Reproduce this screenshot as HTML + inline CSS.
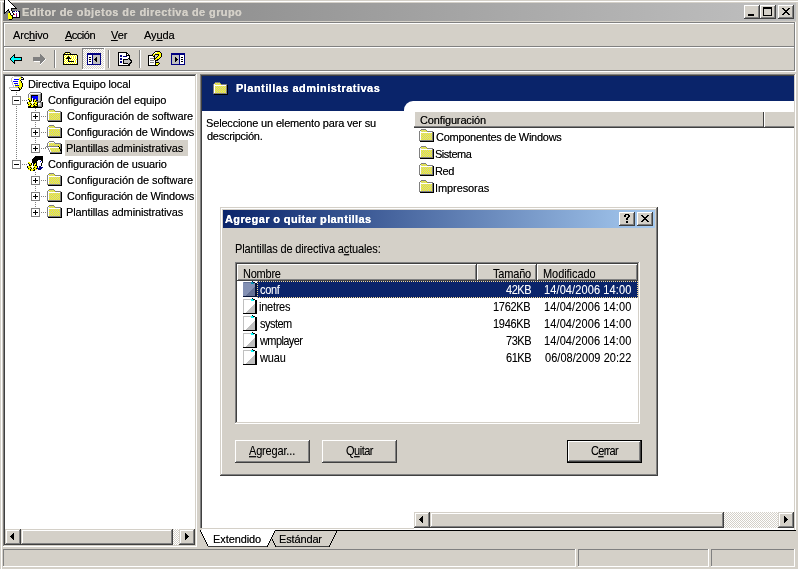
<!DOCTYPE html>
<html><head><meta charset="utf-8"><title>Editor de objetos de directiva de grupo</title><style>
html,body{margin:0;padding:0}
body{width:798px;height:569px;overflow:hidden;background:#d4d0c8;position:relative;font-family:"Liberation Sans",sans-serif;font-size:11px}
body div,body .t,body .ic{position:absolute}
.ic{shape-rendering:crispEdges;overflow:visible}
.t{white-space:pre;line-height:13px;height:13px;will-change:transform;color:#000;text-shadow:0 0 0 rgba(0,0,0,.55)}
.w{color:#fff;text-shadow:0 0 0 rgba(255,255,255,.55)}
.f{color:#d4d0c8}
.b{font-weight:bold}
.b.w{text-shadow:0 0 0 #fff}
.b.f{text-shadow:0 0 0 #d4d0c8}
.ms{text-shadow:0 0 0 rgba(0,0,0,.3)}
.ms.w{text-shadow:0 0 0 rgba(255,255,255,.3)}
.ms{transform:scaleY(1.14);transform-origin:0 10px}
u{text-decoration:underline;text-underline-offset:1px;text-decoration-thickness:1px}
</style></head><body><svg width="0" height="0" style="position:absolute"><defs><symbol id="folder" viewBox="0 0 15 13"><rect x="2" y="0" width="5" height="1" fill="#808080"/><rect x="1" y="1" width="1" height="1" fill="#808080"/><rect x="2" y="1" width="1" height="1" fill="#ffff00"/><rect x="3" y="1" width="1" height="1" fill="#c0c0c0"/><rect x="4" y="1" width="1" height="1" fill="#ffff00"/><rect x="5" y="1" width="1" height="1" fill="#c0c0c0"/><rect x="6" y="1" width="1" height="1" fill="#ffff00"/><rect x="7" y="1" width="1" height="1" fill="#808080"/><rect x="0" y="2" width="1" height="1" fill="#808080"/><rect x="1" y="2" width="1" height="1" fill="#ffffff"/><rect x="2" y="2" width="1" height="1" fill="#c0c0c0"/><rect x="3" y="2" width="1" height="1" fill="#ffff00"/><rect x="4" y="2" width="1" height="1" fill="#c0c0c0"/><rect x="5" y="2" width="1" height="1" fill="#ffff00"/><rect x="6" y="2" width="1" height="1" fill="#c0c0c0"/><rect x="7" y="2" width="1" height="1" fill="#ffff00"/><rect x="8" y="2" width="6" height="1" fill="#808080"/><rect x="0" y="3" width="1" height="1" fill="#808080"/><rect x="1" y="3" width="12" height="1" fill="#ffffff"/><rect x="13" y="3" width="1" height="1" fill="#808080"/><rect x="14" y="3" width="1" height="1" fill="#000000"/><rect x="0" y="4" width="1" height="1" fill="#808080"/><rect x="1" y="4" width="1" height="1" fill="#ffffff"/><rect x="2" y="4" width="1" height="1" fill="#ffff00"/><rect x="3" y="4" width="1" height="1" fill="#c0c0c0"/><rect x="4" y="4" width="1" height="1" fill="#ffff00"/><rect x="5" y="4" width="1" height="1" fill="#c0c0c0"/><rect x="6" y="4" width="1" height="1" fill="#ffff00"/><rect x="7" y="4" width="1" height="1" fill="#c0c0c0"/><rect x="8" y="4" width="1" height="1" fill="#ffff00"/><rect x="9" y="4" width="1" height="1" fill="#c0c0c0"/><rect x="10" y="4" width="1" height="1" fill="#ffff00"/><rect x="11" y="4" width="1" height="1" fill="#c0c0c0"/><rect x="12" y="4" width="1" height="1" fill="#ffff00"/><rect x="13" y="4" width="1" height="1" fill="#808080"/><rect x="14" y="4" width="1" height="1" fill="#000000"/><rect x="0" y="5" width="1" height="1" fill="#808080"/><rect x="1" y="5" width="1" height="1" fill="#ffffff"/><rect x="2" y="5" width="1" height="1" fill="#c0c0c0"/><rect x="3" y="5" width="1" height="1" fill="#ffff00"/><rect x="4" y="5" width="1" height="1" fill="#c0c0c0"/><rect x="5" y="5" width="1" height="1" fill="#ffff00"/><rect x="6" y="5" width="1" height="1" fill="#c0c0c0"/><rect x="7" y="5" width="1" height="1" fill="#ffff00"/><rect x="8" y="5" width="1" height="1" fill="#c0c0c0"/><rect x="9" y="5" width="1" height="1" fill="#ffff00"/><rect x="10" y="5" width="1" height="1" fill="#c0c0c0"/><rect x="11" y="5" width="1" height="1" fill="#ffff00"/><rect x="12" y="5" width="1" height="1" fill="#c0c0c0"/><rect x="13" y="5" width="1" height="1" fill="#808080"/><rect x="14" y="5" width="1" height="1" fill="#000000"/><rect x="0" y="6" width="1" height="1" fill="#808080"/><rect x="1" y="6" width="1" height="1" fill="#ffffff"/><rect x="2" y="6" width="1" height="1" fill="#ffff00"/><rect x="3" y="6" width="1" height="1" fill="#c0c0c0"/><rect x="4" y="6" width="1" height="1" fill="#ffff00"/><rect x="5" y="6" width="1" height="1" fill="#c0c0c0"/><rect x="6" y="6" width="1" height="1" fill="#ffff00"/><rect x="7" y="6" width="1" height="1" fill="#c0c0c0"/><rect x="8" y="6" width="1" height="1" fill="#ffff00"/><rect x="9" y="6" width="1" height="1" fill="#c0c0c0"/><rect x="10" y="6" width="1" height="1" fill="#ffff00"/><rect x="11" y="6" width="1" height="1" fill="#c0c0c0"/><rect x="12" y="6" width="1" height="1" fill="#ffff00"/><rect x="13" y="6" width="1" height="1" fill="#808080"/><rect x="14" y="6" width="1" height="1" fill="#000000"/><rect x="0" y="7" width="1" height="1" fill="#808080"/><rect x="1" y="7" width="1" height="1" fill="#ffffff"/><rect x="2" y="7" width="1" height="1" fill="#c0c0c0"/><rect x="3" y="7" width="1" height="1" fill="#ffff00"/><rect x="4" y="7" width="1" height="1" fill="#c0c0c0"/><rect x="5" y="7" width="1" height="1" fill="#ffff00"/><rect x="6" y="7" width="1" height="1" fill="#c0c0c0"/><rect x="7" y="7" width="1" height="1" fill="#ffff00"/><rect x="8" y="7" width="1" height="1" fill="#c0c0c0"/><rect x="9" y="7" width="1" height="1" fill="#ffff00"/><rect x="10" y="7" width="1" height="1" fill="#c0c0c0"/><rect x="11" y="7" width="1" height="1" fill="#ffff00"/><rect x="12" y="7" width="1" height="1" fill="#c0c0c0"/><rect x="13" y="7" width="1" height="1" fill="#808080"/><rect x="14" y="7" width="1" height="1" fill="#000000"/><rect x="0" y="8" width="1" height="1" fill="#808080"/><rect x="1" y="8" width="1" height="1" fill="#ffffff"/><rect x="2" y="8" width="1" height="1" fill="#ffff00"/><rect x="3" y="8" width="1" height="1" fill="#c0c0c0"/><rect x="4" y="8" width="1" height="1" fill="#ffff00"/><rect x="5" y="8" width="1" height="1" fill="#c0c0c0"/><rect x="6" y="8" width="1" height="1" fill="#ffff00"/><rect x="7" y="8" width="1" height="1" fill="#c0c0c0"/><rect x="8" y="8" width="1" height="1" fill="#ffff00"/><rect x="9" y="8" width="1" height="1" fill="#c0c0c0"/><rect x="10" y="8" width="1" height="1" fill="#ffff00"/><rect x="11" y="8" width="1" height="1" fill="#c0c0c0"/><rect x="12" y="8" width="1" height="1" fill="#ffff00"/><rect x="13" y="8" width="1" height="1" fill="#808080"/><rect x="14" y="8" width="1" height="1" fill="#000000"/><rect x="0" y="9" width="1" height="1" fill="#808080"/><rect x="1" y="9" width="1" height="1" fill="#ffffff"/><rect x="2" y="9" width="1" height="1" fill="#c0c0c0"/><rect x="3" y="9" width="1" height="1" fill="#ffff00"/><rect x="4" y="9" width="1" height="1" fill="#c0c0c0"/><rect x="5" y="9" width="1" height="1" fill="#ffff00"/><rect x="6" y="9" width="1" height="1" fill="#c0c0c0"/><rect x="7" y="9" width="1" height="1" fill="#ffff00"/><rect x="8" y="9" width="1" height="1" fill="#c0c0c0"/><rect x="9" y="9" width="1" height="1" fill="#ffff00"/><rect x="10" y="9" width="1" height="1" fill="#c0c0c0"/><rect x="11" y="9" width="1" height="1" fill="#ffff00"/><rect x="12" y="9" width="1" height="1" fill="#c0c0c0"/><rect x="13" y="9" width="1" height="1" fill="#808080"/><rect x="14" y="9" width="1" height="1" fill="#000000"/><rect x="0" y="10" width="1" height="1" fill="#808080"/><rect x="1" y="10" width="1" height="1" fill="#ffffff"/><rect x="2" y="10" width="1" height="1" fill="#ffff00"/><rect x="3" y="10" width="1" height="1" fill="#c0c0c0"/><rect x="4" y="10" width="1" height="1" fill="#ffff00"/><rect x="5" y="10" width="1" height="1" fill="#c0c0c0"/><rect x="6" y="10" width="1" height="1" fill="#ffff00"/><rect x="7" y="10" width="1" height="1" fill="#c0c0c0"/><rect x="8" y="10" width="1" height="1" fill="#ffff00"/><rect x="9" y="10" width="1" height="1" fill="#c0c0c0"/><rect x="10" y="10" width="1" height="1" fill="#ffff00"/><rect x="11" y="10" width="1" height="1" fill="#c0c0c0"/><rect x="12" y="10" width="1" height="1" fill="#ffff00"/><rect x="13" y="10" width="1" height="1" fill="#808080"/><rect x="14" y="10" width="1" height="1" fill="#000000"/><rect x="0" y="11" width="14" height="1" fill="#808080"/><rect x="14" y="11" width="1" height="1" fill="#000000"/><rect x="1" y="12" width="14" height="1" fill="#000000"/></symbol><symbol id="folderopen" viewBox="0 0 17 13"><rect x="4" y="0" width="5" height="1" fill="#808080"/><rect x="3" y="1" width="1" height="1" fill="#808080"/><rect x="4" y="1" width="5" height="1" fill="#ffffff"/><rect x="9" y="1" width="1" height="1" fill="#808080"/><rect x="2" y="2" width="1" height="1" fill="#808080"/><rect x="3" y="2" width="1" height="1" fill="#ffffff"/><rect x="4" y="2" width="1" height="1" fill="#ffff00"/><rect x="5" y="2" width="1" height="1" fill="#c0c0c0"/><rect x="6" y="2" width="1" height="1" fill="#ffff00"/><rect x="7" y="2" width="1" height="1" fill="#c0c0c0"/><rect x="8" y="2" width="1" height="1" fill="#ffff00"/><rect x="9" y="2" width="1" height="1" fill="#c0c0c0"/><rect x="10" y="2" width="6" height="1" fill="#808080"/><rect x="2" y="3" width="1" height="1" fill="#808080"/><rect x="3" y="3" width="1" height="1" fill="#ffffff"/><rect x="4" y="3" width="1" height="1" fill="#c0c0c0"/><rect x="5" y="3" width="1" height="1" fill="#ffff00"/><rect x="6" y="3" width="1" height="1" fill="#c0c0c0"/><rect x="7" y="3" width="1" height="1" fill="#ffff00"/><rect x="8" y="3" width="1" height="1" fill="#c0c0c0"/><rect x="9" y="3" width="1" height="1" fill="#ffff00"/><rect x="10" y="3" width="1" height="1" fill="#c0c0c0"/><rect x="11" y="3" width="1" height="1" fill="#ffff00"/><rect x="12" y="3" width="1" height="1" fill="#c0c0c0"/><rect x="13" y="3" width="1" height="1" fill="#ffff00"/><rect x="14" y="3" width="1" height="1" fill="#c0c0c0"/><rect x="15" y="3" width="1" height="1" fill="#808080"/><rect x="16" y="3" width="1" height="1" fill="#000000"/><rect x="2" y="4" width="1" height="1" fill="#808080"/><rect x="3" y="4" width="1" height="1" fill="#ffffff"/><rect x="4" y="4" width="1" height="1" fill="#ffff00"/><rect x="5" y="4" width="1" height="1" fill="#c0c0c0"/><rect x="6" y="4" width="1" height="1" fill="#ffff00"/><rect x="7" y="4" width="1" height="1" fill="#c0c0c0"/><rect x="8" y="4" width="1" height="1" fill="#ffff00"/><rect x="9" y="4" width="1" height="1" fill="#c0c0c0"/><rect x="10" y="4" width="1" height="1" fill="#ffff00"/><rect x="11" y="4" width="1" height="1" fill="#c0c0c0"/><rect x="12" y="4" width="1" height="1" fill="#ffff00"/><rect x="13" y="4" width="1" height="1" fill="#c0c0c0"/><rect x="14" y="4" width="1" height="1" fill="#ffff00"/><rect x="15" y="4" width="1" height="1" fill="#808080"/><rect x="16" y="4" width="1" height="1" fill="#000000"/><rect x="1" y="5" width="12" height="1" fill="#808080"/><rect x="13" y="5" width="1" height="1" fill="#000000"/><rect x="14" y="5" width="1" height="1" fill="#ffff00"/><rect x="15" y="5" width="1" height="1" fill="#808080"/><rect x="16" y="5" width="1" height="1" fill="#000000"/><rect x="0" y="6" width="1" height="1" fill="#808080"/><rect x="2" y="6" width="1" height="1" fill="#808080"/><rect x="3" y="6" width="11" height="1" fill="#ffffff"/><rect x="14" y="6" width="1" height="1" fill="#000000"/><rect x="15" y="6" width="1" height="1" fill="#808080"/><rect x="16" y="6" width="1" height="1" fill="#000000"/><rect x="0" y="7" width="1" height="1" fill="#808080"/><rect x="3" y="7" width="1" height="1" fill="#808080"/><rect x="4" y="7" width="1" height="1" fill="#ffffff"/><rect x="5" y="7" width="1" height="1" fill="#ffff00"/><rect x="6" y="7" width="1" height="1" fill="#c0c0c0"/><rect x="7" y="7" width="1" height="1" fill="#ffff00"/><rect x="8" y="7" width="1" height="1" fill="#c0c0c0"/><rect x="9" y="7" width="1" height="1" fill="#ffff00"/><rect x="10" y="7" width="1" height="1" fill="#c0c0c0"/><rect x="11" y="7" width="1" height="1" fill="#ffff00"/><rect x="12" y="7" width="1" height="1" fill="#c0c0c0"/><rect x="13" y="7" width="1" height="1" fill="#ffff00"/><rect x="14" y="7" width="1" height="1" fill="#000000"/><rect x="15" y="7" width="1" height="1" fill="#808080"/><rect x="16" y="7" width="1" height="1" fill="#000000"/><rect x="3" y="8" width="1" height="1" fill="#808080"/><rect x="4" y="8" width="1" height="1" fill="#ffffff"/><rect x="5" y="8" width="1" height="1" fill="#c0c0c0"/><rect x="6" y="8" width="1" height="1" fill="#ffff00"/><rect x="7" y="8" width="1" height="1" fill="#c0c0c0"/><rect x="8" y="8" width="1" height="1" fill="#ffff00"/><rect x="9" y="8" width="1" height="1" fill="#c0c0c0"/><rect x="10" y="8" width="1" height="1" fill="#ffff00"/><rect x="11" y="8" width="1" height="1" fill="#c0c0c0"/><rect x="12" y="8" width="1" height="1" fill="#ffff00"/><rect x="13" y="8" width="1" height="1" fill="#c0c0c0"/><rect x="14" y="8" width="1" height="1" fill="#ffff00"/><rect x="15" y="8" width="2" height="1" fill="#000000"/><rect x="4" y="9" width="1" height="1" fill="#808080"/><rect x="5" y="9" width="1" height="1" fill="#ffffff"/><rect x="6" y="9" width="1" height="1" fill="#ffff00"/><rect x="7" y="9" width="1" height="1" fill="#c0c0c0"/><rect x="8" y="9" width="1" height="1" fill="#ffff00"/><rect x="9" y="9" width="1" height="1" fill="#c0c0c0"/><rect x="10" y="9" width="1" height="1" fill="#ffff00"/><rect x="11" y="9" width="1" height="1" fill="#c0c0c0"/><rect x="12" y="9" width="1" height="1" fill="#ffff00"/><rect x="13" y="9" width="1" height="1" fill="#c0c0c0"/><rect x="14" y="9" width="1" height="1" fill="#ffff00"/><rect x="15" y="9" width="2" height="1" fill="#000000"/><rect x="4" y="10" width="1" height="1" fill="#808080"/><rect x="5" y="10" width="1" height="1" fill="#ffffff"/><rect x="6" y="10" width="1" height="1" fill="#c0c0c0"/><rect x="7" y="10" width="1" height="1" fill="#ffff00"/><rect x="8" y="10" width="1" height="1" fill="#c0c0c0"/><rect x="9" y="10" width="1" height="1" fill="#ffff00"/><rect x="10" y="10" width="1" height="1" fill="#c0c0c0"/><rect x="11" y="10" width="1" height="1" fill="#ffff00"/><rect x="12" y="10" width="1" height="1" fill="#c0c0c0"/><rect x="13" y="10" width="1" height="1" fill="#ffff00"/><rect x="14" y="10" width="1" height="1" fill="#c0c0c0"/><rect x="15" y="10" width="1" height="1" fill="#808080"/><rect x="16" y="10" width="1" height="1" fill="#000000"/><rect x="5" y="11" width="11" height="1" fill="#808080"/><rect x="16" y="11" width="1" height="1" fill="#000000"/><rect x="5" y="12" width="12" height="1" fill="#000000"/></symbol><symbol id="scroll" viewBox="0 0 16 15"><rect x="6" y="0" width="8" height="1" fill="#c0c0c0"/><rect x="4" y="1" width="1" height="1" fill="#c0c0c0"/><rect x="6" y="1" width="6" height="1" fill="#ffffff"/><rect x="12" y="1" width="1" height="1" fill="#ffff00"/><rect x="13" y="1" width="2" height="1" fill="#000000"/><rect x="3" y="2" width="1" height="1" fill="#c0c0c0"/><rect x="5" y="2" width="6" height="1" fill="#ffffff"/><rect x="11" y="2" width="2" height="1" fill="#ffff00"/><rect x="13" y="2" width="1" height="1" fill="#c0c0c0"/><rect x="14" y="2" width="1" height="1" fill="#ffffff"/><rect x="15" y="2" width="1" height="1" fill="#000000"/><rect x="3" y="3" width="1" height="1" fill="#c0c0c0"/><rect x="5" y="3" width="1" height="1" fill="#ffffff"/><rect x="6" y="3" width="5" height="1" fill="#0000ff"/><rect x="11" y="3" width="1" height="1" fill="#ffff00"/><rect x="12" y="3" width="1" height="1" fill="#ffffff"/><rect x="13" y="3" width="3" height="1" fill="#000000"/><rect x="3" y="4" width="1" height="1" fill="#c0c0c0"/><rect x="5" y="4" width="6" height="1" fill="#ffffff"/><rect x="11" y="4" width="1" height="1" fill="#ffff00"/><rect x="12" y="4" width="1" height="1" fill="#000000"/><rect x="3" y="5" width="1" height="1" fill="#c0c0c0"/><rect x="4" y="5" width="1" height="1" fill="#ffffff"/><rect x="5" y="5" width="5" height="1" fill="#0000ff"/><rect x="10" y="5" width="1" height="1" fill="#ffffff"/><rect x="11" y="5" width="2" height="1" fill="#ffff00"/><rect x="13" y="5" width="1" height="1" fill="#000000"/><rect x="4" y="6" width="1" height="1" fill="#c0c0c0"/><rect x="5" y="6" width="6" height="1" fill="#ffffff"/><rect x="11" y="6" width="2" height="1" fill="#ffff00"/><rect x="13" y="6" width="1" height="1" fill="#000000"/><rect x="4" y="7" width="1" height="1" fill="#c0c0c0"/><rect x="5" y="7" width="1" height="1" fill="#ffffff"/><rect x="6" y="7" width="4" height="1" fill="#0000ff"/><rect x="10" y="7" width="1" height="1" fill="#ffffff"/><rect x="11" y="7" width="3" height="1" fill="#ffff00"/><rect x="14" y="7" width="1" height="1" fill="#000000"/><rect x="4" y="8" width="1" height="1" fill="#c0c0c0"/><rect x="5" y="8" width="2" height="1" fill="#ffffff"/><rect x="7" y="8" width="1" height="1" fill="#ffff00"/><rect x="8" y="8" width="1" height="1" fill="#ffffff"/><rect x="9" y="8" width="1" height="1" fill="#ffff00"/><rect x="10" y="8" width="1" height="1" fill="#ffffff"/><rect x="11" y="8" width="3" height="1" fill="#ffff00"/><rect x="14" y="8" width="1" height="1" fill="#000000"/><rect x="5" y="9" width="1" height="1" fill="#c0c0c0"/><rect x="6" y="9" width="1" height="1" fill="#ffffff"/><rect x="7" y="9" width="4" height="1" fill="#0000ff"/><rect x="11" y="9" width="3" height="1" fill="#ffff00"/><rect x="14" y="9" width="1" height="1" fill="#000000"/><rect x="5" y="10" width="1" height="1" fill="#c0c0c0"/><rect x="6" y="10" width="1" height="1" fill="#ffffff"/><rect x="7" y="10" width="7" height="1" fill="#ffff00"/><rect x="14" y="10" width="1" height="1" fill="#000000"/><rect x="1" y="11" width="9" height="1" fill="#c0c0c0"/><rect x="10" y="11" width="1" height="1" fill="#000000"/><rect x="11" y="11" width="2" height="1" fill="#ffff00"/><rect x="13" y="11" width="1" height="1" fill="#000000"/><rect x="1" y="12" width="1" height="1" fill="#c0c0c0"/><rect x="2" y="12" width="8" height="1" fill="#ffffff"/><rect x="10" y="12" width="1" height="1" fill="#c0c0c0"/><rect x="11" y="12" width="1" height="1" fill="#000000"/><rect x="12" y="12" width="1" height="1" fill="#ffff00"/><rect x="13" y="12" width="1" height="1" fill="#000000"/><rect x="2" y="13" width="1" height="1" fill="#c0c0c0"/><rect x="3" y="13" width="8" height="1" fill="#ffffff"/><rect x="11" y="13" width="2" height="1" fill="#000000"/><rect x="3" y="14" width="9" height="1" fill="#000000"/></symbol><symbol id="computer" viewBox="0 0 16 16"><rect x="3" y="0" width="11" height="1" fill="#808080"/><rect x="2" y="1" width="1" height="1" fill="#808080"/><rect x="3" y="1" width="10" height="1" fill="#ffffff"/><rect x="13" y="1" width="1" height="1" fill="#c0c0c0"/><rect x="14" y="1" width="1" height="1" fill="#000000"/><rect x="1" y="2" width="1" height="1" fill="#808080"/><rect x="2" y="2" width="1" height="1" fill="#ffffff"/><rect x="3" y="2" width="10" height="1" fill="#c0c0c0"/><rect x="13" y="2" width="1" height="1" fill="#808080"/><rect x="14" y="2" width="1" height="1" fill="#000000"/><rect x="1" y="3" width="1" height="1" fill="#808080"/><rect x="2" y="3" width="1" height="1" fill="#ffffff"/><rect x="3" y="3" width="1" height="1" fill="#c0c0c0"/><rect x="4" y="3" width="7" height="1" fill="#000000"/><rect x="11" y="3" width="2" height="1" fill="#c0c0c0"/><rect x="13" y="3" width="1" height="1" fill="#808080"/><rect x="14" y="3" width="1" height="1" fill="#000000"/><rect x="1" y="4" width="1" height="1" fill="#808080"/><rect x="2" y="4" width="1" height="1" fill="#ffffff"/><rect x="3" y="4" width="1" height="1" fill="#c0c0c0"/><rect x="4" y="4" width="1" height="1" fill="#000000"/><rect x="5" y="4" width="6" height="1" fill="#0000ff"/><rect x="11" y="4" width="2" height="1" fill="#c0c0c0"/><rect x="13" y="4" width="1" height="1" fill="#808080"/><rect x="14" y="4" width="1" height="1" fill="#000000"/><rect x="1" y="5" width="1" height="1" fill="#808080"/><rect x="2" y="5" width="1" height="1" fill="#ffffff"/><rect x="3" y="5" width="1" height="1" fill="#c0c0c0"/><rect x="4" y="5" width="1" height="1" fill="#000000"/><rect x="5" y="5" width="6" height="1" fill="#0000ff"/><rect x="11" y="5" width="2" height="1" fill="#c0c0c0"/><rect x="13" y="5" width="1" height="1" fill="#808080"/><rect x="14" y="5" width="1" height="1" fill="#000000"/><rect x="1" y="6" width="2" height="1" fill="#ffff00"/><rect x="3" y="6" width="1" height="1" fill="#c0c0c0"/><rect x="4" y="6" width="1" height="1" fill="#000000"/><rect x="5" y="6" width="1" height="1" fill="#ffffff"/><rect x="6" y="6" width="5" height="1" fill="#0000ff"/><rect x="11" y="6" width="2" height="1" fill="#c0c0c0"/><rect x="13" y="6" width="1" height="1" fill="#808080"/><rect x="14" y="6" width="1" height="1" fill="#000000"/><rect x="1" y="7" width="1" height="1" fill="#000000"/><rect x="2" y="7" width="2" height="1" fill="#ffff00"/><rect x="4" y="7" width="1" height="1" fill="#000000"/><rect x="5" y="7" width="1" height="1" fill="#ffffff"/><rect x="6" y="7" width="1" height="1" fill="#000000"/><rect x="7" y="7" width="1" height="1" fill="#0000ff"/><rect x="8" y="7" width="1" height="1" fill="#ffff00"/><rect x="9" y="7" width="2" height="1" fill="#0000ff"/><rect x="11" y="7" width="2" height="1" fill="#c0c0c0"/><rect x="13" y="7" width="1" height="1" fill="#808080"/><rect x="14" y="7" width="1" height="1" fill="#000000"/><rect x="2" y="8" width="1" height="1" fill="#000000"/><rect x="3" y="8" width="1" height="1" fill="#ffff00"/><rect x="4" y="8" width="1" height="1" fill="#000000"/><rect x="5" y="8" width="1" height="1" fill="#ffffff"/><rect x="6" y="8" width="1" height="1" fill="#000000"/><rect x="7" y="8" width="2" height="1" fill="#ffff00"/><rect x="9" y="8" width="2" height="1" fill="#000000"/><rect x="11" y="8" width="2" height="1" fill="#c0c0c0"/><rect x="13" y="8" width="1" height="1" fill="#808080"/><rect x="14" y="8" width="1" height="1" fill="#000000"/><rect x="2" y="9" width="2" height="1" fill="#000000"/><rect x="4" y="9" width="1" height="1" fill="#ffff00"/><rect x="5" y="9" width="1" height="1" fill="#ffffff"/><rect x="6" y="9" width="1" height="1" fill="#000000"/><rect x="7" y="9" width="1" height="1" fill="#ffff00"/><rect x="8" y="9" width="1" height="1" fill="#000000"/><rect x="9" y="9" width="4" height="1" fill="#808080"/><rect x="13" y="9" width="1" height="1" fill="#000000"/><rect x="0" y="10" width="1" height="1" fill="#000000"/><rect x="1" y="10" width="3" height="1" fill="#ffff00"/><rect x="4" y="10" width="3" height="1" fill="#ffffff"/><rect x="7" y="10" width="3" height="1" fill="#ffff00"/><rect x="10" y="10" width="1" height="1" fill="#000000"/><rect x="11" y="10" width="4" height="1" fill="#808080"/><rect x="15" y="10" width="1" height="1" fill="#000000"/><rect x="0" y="11" width="1" height="1" fill="#000000"/><rect x="1" y="11" width="2" height="1" fill="#ffff00"/><rect x="3" y="11" width="1" height="1" fill="#000000"/><rect x="4" y="11" width="1" height="1" fill="#ffff00"/><rect x="5" y="11" width="1" height="1" fill="#ffffff"/><rect x="6" y="11" width="1" height="1" fill="#ffff00"/><rect x="7" y="11" width="1" height="1" fill="#000000"/><rect x="8" y="11" width="2" height="1" fill="#ffff00"/><rect x="10" y="11" width="1" height="1" fill="#000000"/><rect x="11" y="11" width="2" height="1" fill="#ffffff"/><rect x="13" y="11" width="1" height="1" fill="#c0c0c0"/><rect x="14" y="11" width="1" height="1" fill="#808080"/><rect x="15" y="11" width="1" height="1" fill="#000000"/><rect x="1" y="12" width="1" height="1" fill="#000000"/><rect x="2" y="12" width="2" height="1" fill="#ffff00"/><rect x="4" y="12" width="1" height="1" fill="#000000"/><rect x="5" y="12" width="1" height="1" fill="#ffffff"/><rect x="6" y="12" width="1" height="1" fill="#000000"/><rect x="7" y="12" width="2" height="1" fill="#ffff00"/><rect x="9" y="12" width="2" height="1" fill="#000000"/><rect x="11" y="12" width="1" height="1" fill="#ffffff"/><rect x="12" y="12" width="2" height="1" fill="#c0c0c0"/><rect x="14" y="12" width="1" height="1" fill="#808080"/><rect x="15" y="12" width="1" height="1" fill="#000000"/><rect x="1" y="13" width="2" height="1" fill="#ffff00"/><rect x="3" y="13" width="1" height="1" fill="#000000"/><rect x="4" y="13" width="3" height="1" fill="#ffff00"/><rect x="7" y="13" width="1" height="1" fill="#000000"/><rect x="8" y="13" width="2" height="1" fill="#ffff00"/><rect x="10" y="13" width="1" height="1" fill="#000000"/><rect x="11" y="13" width="3" height="1" fill="#c0c0c0"/><rect x="14" y="13" width="1" height="1" fill="#808080"/><rect x="15" y="13" width="1" height="1" fill="#000000"/><rect x="1" y="14" width="3" height="1" fill="#000000"/><rect x="4" y="14" width="2" height="1" fill="#ffff00"/><rect x="6" y="14" width="5" height="1" fill="#000000"/><rect x="11" y="14" width="4" height="1" fill="#808080"/><rect x="15" y="14" width="1" height="1" fill="#000000"/><rect x="1" y="15" width="14" height="1" fill="#000000"/></symbol><symbol id="user" viewBox="0 0 16 15"><rect x="8" y="0" width="8" height="1" fill="#000000"/><rect x="7" y="1" width="9" height="1" fill="#000000"/><rect x="6" y="2" width="10" height="1" fill="#000000"/><rect x="5" y="3" width="11" height="1" fill="#000000"/><rect x="5" y="4" width="6" height="1" fill="#000000"/><rect x="11" y="4" width="3" height="1" fill="#ffffff"/><rect x="14" y="4" width="2" height="1" fill="#000000"/><rect x="5" y="5" width="5" height="1" fill="#000000"/><rect x="10" y="5" width="3" height="1" fill="#ffffff"/><rect x="13" y="5" width="1" height="1" fill="#0000ff"/><rect x="14" y="5" width="1" height="1" fill="#ffffff"/><rect x="15" y="5" width="1" height="1" fill="#000000"/><rect x="1" y="6" width="2" height="1" fill="#ffff00"/><rect x="5" y="6" width="5" height="1" fill="#000000"/><rect x="10" y="6" width="5" height="1" fill="#ffffff"/><rect x="15" y="6" width="1" height="1" fill="#000000"/><rect x="1" y="7" width="1" height="1" fill="#000000"/><rect x="2" y="7" width="2" height="1" fill="#ffff00"/><rect x="4" y="7" width="1" height="1" fill="#000000"/><rect x="5" y="7" width="1" height="1" fill="#ffffff"/><rect x="6" y="7" width="2" height="1" fill="#000000"/><rect x="8" y="7" width="1" height="1" fill="#ffff00"/><rect x="9" y="7" width="1" height="1" fill="#000000"/><rect x="10" y="7" width="4" height="1" fill="#ffffff"/><rect x="14" y="7" width="1" height="1" fill="#000000"/><rect x="2" y="8" width="1" height="1" fill="#000000"/><rect x="3" y="8" width="1" height="1" fill="#ffff00"/><rect x="4" y="8" width="1" height="1" fill="#000000"/><rect x="5" y="8" width="1" height="1" fill="#ffffff"/><rect x="6" y="8" width="1" height="1" fill="#000000"/><rect x="7" y="8" width="2" height="1" fill="#ffff00"/><rect x="9" y="8" width="1" height="1" fill="#000000"/><rect x="10" y="8" width="4" height="1" fill="#ffffff"/><rect x="14" y="8" width="1" height="1" fill="#000000"/><rect x="2" y="9" width="2" height="1" fill="#000000"/><rect x="4" y="9" width="1" height="1" fill="#ffff00"/><rect x="5" y="9" width="1" height="1" fill="#ffffff"/><rect x="6" y="9" width="1" height="1" fill="#000000"/><rect x="7" y="9" width="1" height="1" fill="#ffff00"/><rect x="8" y="9" width="2" height="1" fill="#000000"/><rect x="10" y="9" width="4" height="1" fill="#ffffff"/><rect x="14" y="9" width="1" height="1" fill="#000000"/><rect x="0" y="10" width="1" height="1" fill="#000000"/><rect x="1" y="10" width="3" height="1" fill="#ffff00"/><rect x="4" y="10" width="3" height="1" fill="#ffffff"/><rect x="7" y="10" width="3" height="1" fill="#ffff00"/><rect x="10" y="10" width="1" height="1" fill="#000000"/><rect x="11" y="10" width="1" height="1" fill="#ffffff"/><rect x="12" y="10" width="2" height="1" fill="#000080"/><rect x="0" y="11" width="1" height="1" fill="#000000"/><rect x="1" y="11" width="2" height="1" fill="#ffff00"/><rect x="3" y="11" width="1" height="1" fill="#000000"/><rect x="4" y="11" width="1" height="1" fill="#ffff00"/><rect x="5" y="11" width="1" height="1" fill="#ffffff"/><rect x="6" y="11" width="1" height="1" fill="#ffff00"/><rect x="7" y="11" width="1" height="1" fill="#000000"/><rect x="8" y="11" width="2" height="1" fill="#ffff00"/><rect x="10" y="11" width="1" height="1" fill="#000080"/><rect x="11" y="11" width="1" height="1" fill="#ffffff"/><rect x="12" y="11" width="4" height="1" fill="#000080"/><rect x="1" y="12" width="1" height="1" fill="#000000"/><rect x="2" y="12" width="2" height="1" fill="#ffff00"/><rect x="4" y="12" width="1" height="1" fill="#000000"/><rect x="5" y="12" width="1" height="1" fill="#ffffff"/><rect x="6" y="12" width="1" height="1" fill="#000000"/><rect x="7" y="12" width="2" height="1" fill="#ffff00"/><rect x="9" y="12" width="1" height="1" fill="#000000"/><rect x="10" y="12" width="5" height="1" fill="#000080"/><rect x="1" y="13" width="2" height="1" fill="#ffff00"/><rect x="3" y="13" width="1" height="1" fill="#000000"/><rect x="4" y="13" width="3" height="1" fill="#ffff00"/><rect x="7" y="13" width="1" height="1" fill="#000000"/><rect x="8" y="13" width="2" height="1" fill="#ffff00"/><rect x="11" y="13" width="3" height="1" fill="#000080"/><rect x="3" y="14" width="1" height="1" fill="#000000"/><rect x="4" y="14" width="2" height="1" fill="#ffff00"/><rect x="6" y="14" width="2" height="1" fill="#000000"/></symbol><symbol id="doc" viewBox="0 0 14 16"><rect x="9" y="0" width="1" height="1" fill="#000000"/><rect x="0" y="1" width="8" height="1" fill="#c0c0c0"/><rect x="8" y="1" width="2" height="1" fill="#00ffff"/><rect x="10" y="1" width="2" height="1" fill="#000000"/><rect x="0" y="2" width="1" height="1" fill="#c0c0c0"/><rect x="1" y="2" width="7" height="1" fill="#ffffff"/><rect x="8" y="2" width="3" height="1" fill="#00ffff"/><rect x="11" y="2" width="1" height="1" fill="#ffffff"/><rect x="12" y="2" width="2" height="1" fill="#000000"/><rect x="0" y="3" width="1" height="1" fill="#c0c0c0"/><rect x="1" y="3" width="11" height="1" fill="#ffffff"/><rect x="12" y="3" width="2" height="1" fill="#000000"/><rect x="0" y="4" width="1" height="1" fill="#c0c0c0"/><rect x="1" y="4" width="11" height="1" fill="#ffffff"/><rect x="12" y="4" width="2" height="1" fill="#000000"/><rect x="0" y="5" width="1" height="1" fill="#c0c0c0"/><rect x="1" y="5" width="11" height="1" fill="#ffffff"/><rect x="12" y="5" width="2" height="1" fill="#000000"/><rect x="0" y="6" width="1" height="1" fill="#c0c0c0"/><rect x="1" y="6" width="10" height="1" fill="#ffffff"/><rect x="11" y="6" width="1" height="1" fill="#c0c0c0"/><rect x="12" y="6" width="2" height="1" fill="#000000"/><rect x="0" y="7" width="1" height="1" fill="#c0c0c0"/><rect x="1" y="7" width="9" height="1" fill="#ffffff"/><rect x="10" y="7" width="2" height="1" fill="#c0c0c0"/><rect x="12" y="7" width="2" height="1" fill="#000000"/><rect x="0" y="8" width="1" height="1" fill="#c0c0c0"/><rect x="1" y="8" width="8" height="1" fill="#ffffff"/><rect x="9" y="8" width="3" height="1" fill="#c0c0c0"/><rect x="12" y="8" width="2" height="1" fill="#000000"/><rect x="0" y="9" width="1" height="1" fill="#c0c0c0"/><rect x="1" y="9" width="7" height="1" fill="#ffffff"/><rect x="8" y="9" width="4" height="1" fill="#c0c0c0"/><rect x="12" y="9" width="2" height="1" fill="#000000"/><rect x="0" y="10" width="1" height="1" fill="#c0c0c0"/><rect x="1" y="10" width="6" height="1" fill="#ffffff"/><rect x="7" y="10" width="5" height="1" fill="#c0c0c0"/><rect x="12" y="10" width="2" height="1" fill="#000000"/><rect x="0" y="11" width="1" height="1" fill="#c0c0c0"/><rect x="1" y="11" width="5" height="1" fill="#ffffff"/><rect x="6" y="11" width="6" height="1" fill="#c0c0c0"/><rect x="12" y="11" width="2" height="1" fill="#000000"/><rect x="0" y="12" width="1" height="1" fill="#c0c0c0"/><rect x="1" y="12" width="4" height="1" fill="#ffffff"/><rect x="5" y="12" width="7" height="1" fill="#c0c0c0"/><rect x="12" y="12" width="2" height="1" fill="#000000"/><rect x="0" y="13" width="1" height="1" fill="#c0c0c0"/><rect x="1" y="13" width="3" height="1" fill="#ffffff"/><rect x="4" y="13" width="8" height="1" fill="#c0c0c0"/><rect x="12" y="13" width="2" height="1" fill="#000000"/><rect x="0" y="14" width="1" height="1" fill="#c0c0c0"/><rect x="1" y="14" width="2" height="1" fill="#ffffff"/><rect x="3" y="14" width="9" height="1" fill="#c0c0c0"/><rect x="12" y="14" width="2" height="1" fill="#000000"/><rect x="0" y="15" width="14" height="1" fill="#000000"/></symbol><symbol id="docsel" viewBox="0 0 14 16"><rect x="9" y="0" width="1" height="1" fill="#051235"/><rect x="0" y="1" width="1" height="1" fill="#8491b4"/><rect x="1" y="1" width="7" height="1" fill="#657295"/><rect x="8" y="1" width="2" height="1" fill="#0591b4"/><rect x="10" y="1" width="2" height="1" fill="#051235"/><rect x="0" y="2" width="8" height="1" fill="#8491b4"/><rect x="8" y="2" width="3" height="1" fill="#0591b4"/><rect x="11" y="2" width="1" height="1" fill="#8491b4"/><rect x="12" y="2" width="2" height="1" fill="#051235"/><rect x="0" y="3" width="12" height="1" fill="#8491b4"/><rect x="12" y="3" width="2" height="1" fill="#051235"/><rect x="0" y="4" width="12" height="1" fill="#8491b4"/><rect x="12" y="4" width="2" height="1" fill="#051235"/><rect x="0" y="5" width="12" height="1" fill="#8491b4"/><rect x="12" y="5" width="2" height="1" fill="#051235"/><rect x="0" y="6" width="11" height="1" fill="#8491b4"/><rect x="11" y="6" width="1" height="1" fill="#657295"/><rect x="12" y="6" width="2" height="1" fill="#051235"/><rect x="0" y="7" width="10" height="1" fill="#8491b4"/><rect x="10" y="7" width="2" height="1" fill="#657295"/><rect x="12" y="7" width="2" height="1" fill="#051235"/><rect x="0" y="8" width="9" height="1" fill="#8491b4"/><rect x="9" y="8" width="3" height="1" fill="#657295"/><rect x="12" y="8" width="2" height="1" fill="#051235"/><rect x="0" y="9" width="8" height="1" fill="#8491b4"/><rect x="8" y="9" width="4" height="1" fill="#657295"/><rect x="12" y="9" width="2" height="1" fill="#051235"/><rect x="0" y="10" width="7" height="1" fill="#8491b4"/><rect x="7" y="10" width="5" height="1" fill="#657295"/><rect x="12" y="10" width="2" height="1" fill="#051235"/><rect x="0" y="11" width="6" height="1" fill="#8491b4"/><rect x="6" y="11" width="6" height="1" fill="#657295"/><rect x="12" y="11" width="2" height="1" fill="#051235"/><rect x="0" y="12" width="5" height="1" fill="#8491b4"/><rect x="5" y="12" width="7" height="1" fill="#657295"/><rect x="12" y="12" width="2" height="1" fill="#051235"/><rect x="0" y="13" width="4" height="1" fill="#8491b4"/><rect x="4" y="13" width="8" height="1" fill="#657295"/><rect x="12" y="13" width="2" height="1" fill="#051235"/><rect x="0" y="14" width="3" height="1" fill="#8491b4"/><rect x="3" y="14" width="9" height="1" fill="#657295"/><rect x="12" y="14" width="2" height="1" fill="#051235"/><rect x="0" y="15" width="14" height="1" fill="#051235"/></symbol><symbol id="tb_back" viewBox="0 0 12 10"><rect x="4" y="0" width="1" height="1" fill="#000000"/><rect x="3" y="1" width="2" height="1" fill="#000000"/><rect x="2" y="2" width="1" height="1" fill="#000000"/><rect x="3" y="2" width="1" height="1" fill="#00ffff"/><rect x="4" y="2" width="1" height="1" fill="#000000"/><rect x="1" y="3" width="1" height="1" fill="#000000"/><rect x="2" y="3" width="2" height="1" fill="#00ffff"/><rect x="4" y="3" width="8" height="1" fill="#000000"/><rect x="0" y="4" width="1" height="1" fill="#000000"/><rect x="1" y="4" width="10" height="1" fill="#00ffff"/><rect x="11" y="4" width="1" height="1" fill="#000000"/><rect x="0" y="5" width="1" height="1" fill="#000000"/><rect x="1" y="5" width="10" height="1" fill="#00ffff"/><rect x="11" y="5" width="1" height="1" fill="#000000"/><rect x="1" y="6" width="1" height="1" fill="#000000"/><rect x="2" y="6" width="2" height="1" fill="#00ffff"/><rect x="4" y="6" width="8" height="1" fill="#000000"/><rect x="2" y="7" width="1" height="1" fill="#000000"/><rect x="3" y="7" width="1" height="1" fill="#00ffff"/><rect x="4" y="7" width="1" height="1" fill="#000000"/><rect x="3" y="8" width="2" height="1" fill="#000000"/><rect x="4" y="9" width="1" height="1" fill="#000000"/></symbol><symbol id="tb_fwd" viewBox="0 0 13 11"><rect x="7" y="0" width="1" height="1" fill="#808080"/><rect x="7" y="1" width="2" height="1" fill="#808080"/><rect x="7" y="2" width="3" height="1" fill="#808080"/><rect x="0" y="3" width="11" height="1" fill="#808080"/><rect x="0" y="4" width="12" height="1" fill="#808080"/><rect x="0" y="5" width="12" height="1" fill="#808080"/><rect x="12" y="5" width="1" height="1" fill="#ffffff"/><rect x="0" y="6" width="11" height="1" fill="#808080"/><rect x="11" y="6" width="1" height="1" fill="#ffffff"/><rect x="1" y="7" width="6" height="1" fill="#ffffff"/><rect x="7" y="7" width="3" height="1" fill="#808080"/><rect x="10" y="7" width="1" height="1" fill="#ffffff"/><rect x="7" y="8" width="2" height="1" fill="#808080"/><rect x="9" y="8" width="1" height="1" fill="#ffffff"/><rect x="7" y="9" width="1" height="1" fill="#808080"/><rect x="8" y="9" width="1" height="1" fill="#ffffff"/><rect x="7" y="10" width="1" height="1" fill="#ffffff"/></symbol><symbol id="tb_up" viewBox="0 0 15 13"><rect x="2" y="0" width="5" height="1" fill="#000000"/><rect x="1" y="1" width="1" height="1" fill="#000000"/><rect x="2" y="1" width="1" height="1" fill="#ffff00"/><rect x="3" y="1" width="1" height="1" fill="#ffffff"/><rect x="4" y="1" width="1" height="1" fill="#ffff00"/><rect x="5" y="1" width="1" height="1" fill="#ffffff"/><rect x="6" y="1" width="1" height="1" fill="#ffff00"/><rect x="7" y="1" width="1" height="1" fill="#000000"/><rect x="0" y="2" width="14" height="1" fill="#000000"/><rect x="0" y="3" width="1" height="1" fill="#000000"/><rect x="1" y="3" width="1" height="1" fill="#ffff00"/><rect x="2" y="3" width="1" height="1" fill="#ffffff"/><rect x="3" y="3" width="1" height="1" fill="#ffff00"/><rect x="4" y="3" width="1" height="1" fill="#ffffff"/><rect x="5" y="3" width="1" height="1" fill="#ffff00"/><rect x="6" y="3" width="1" height="1" fill="#ffffff"/><rect x="7" y="3" width="1" height="1" fill="#ffff00"/><rect x="8" y="3" width="1" height="1" fill="#ffffff"/><rect x="9" y="3" width="1" height="1" fill="#ffff00"/><rect x="10" y="3" width="1" height="1" fill="#ffffff"/><rect x="11" y="3" width="1" height="1" fill="#ffff00"/><rect x="12" y="3" width="1" height="1" fill="#ffffff"/><rect x="13" y="3" width="1" height="1" fill="#ffff00"/><rect x="14" y="3" width="1" height="1" fill="#000000"/><rect x="0" y="4" width="1" height="1" fill="#000000"/><rect x="1" y="4" width="1" height="1" fill="#ffffff"/><rect x="2" y="4" width="1" height="1" fill="#ffff00"/><rect x="3" y="4" width="1" height="1" fill="#ffffff"/><rect x="4" y="4" width="1" height="1" fill="#ffff00"/><rect x="5" y="4" width="1" height="1" fill="#000000"/><rect x="6" y="4" width="1" height="1" fill="#ffff00"/><rect x="7" y="4" width="1" height="1" fill="#ffffff"/><rect x="8" y="4" width="1" height="1" fill="#ffff00"/><rect x="9" y="4" width="1" height="1" fill="#ffffff"/><rect x="10" y="4" width="1" height="1" fill="#ffff00"/><rect x="11" y="4" width="1" height="1" fill="#ffffff"/><rect x="12" y="4" width="1" height="1" fill="#ffff00"/><rect x="13" y="4" width="1" height="1" fill="#ffffff"/><rect x="14" y="4" width="1" height="1" fill="#000000"/><rect x="0" y="5" width="1" height="1" fill="#000000"/><rect x="1" y="5" width="1" height="1" fill="#ffff00"/><rect x="2" y="5" width="1" height="1" fill="#ffffff"/><rect x="3" y="5" width="1" height="1" fill="#ffff00"/><rect x="4" y="5" width="3" height="1" fill="#000000"/><rect x="7" y="5" width="1" height="1" fill="#ffffff"/><rect x="8" y="5" width="1" height="1" fill="#ffff00"/><rect x="9" y="5" width="1" height="1" fill="#ffffff"/><rect x="10" y="5" width="1" height="1" fill="#ffff00"/><rect x="11" y="5" width="1" height="1" fill="#ffffff"/><rect x="12" y="5" width="1" height="1" fill="#ffff00"/><rect x="13" y="5" width="1" height="1" fill="#ffffff"/><rect x="14" y="5" width="1" height="1" fill="#000000"/><rect x="0" y="6" width="1" height="1" fill="#000000"/><rect x="1" y="6" width="1" height="1" fill="#ffffff"/><rect x="2" y="6" width="1" height="1" fill="#ffff00"/><rect x="3" y="6" width="5" height="1" fill="#000000"/><rect x="8" y="6" width="1" height="1" fill="#ffff00"/><rect x="9" y="6" width="1" height="1" fill="#ffffff"/><rect x="10" y="6" width="1" height="1" fill="#ffff00"/><rect x="11" y="6" width="1" height="1" fill="#ffffff"/><rect x="12" y="6" width="1" height="1" fill="#ffff00"/><rect x="13" y="6" width="1" height="1" fill="#ffffff"/><rect x="14" y="6" width="1" height="1" fill="#000000"/><rect x="0" y="7" width="1" height="1" fill="#000000"/><rect x="1" y="7" width="1" height="1" fill="#ffff00"/><rect x="2" y="7" width="1" height="1" fill="#ffffff"/><rect x="3" y="7" width="1" height="1" fill="#ffff00"/><rect x="4" y="7" width="1" height="1" fill="#ffffff"/><rect x="5" y="7" width="1" height="1" fill="#000000"/><rect x="6" y="7" width="1" height="1" fill="#ffffff"/><rect x="7" y="7" width="1" height="1" fill="#ffff00"/><rect x="8" y="7" width="1" height="1" fill="#ffffff"/><rect x="9" y="7" width="1" height="1" fill="#ffff00"/><rect x="10" y="7" width="1" height="1" fill="#ffffff"/><rect x="11" y="7" width="1" height="1" fill="#ffff00"/><rect x="12" y="7" width="1" height="1" fill="#ffffff"/><rect x="13" y="7" width="1" height="1" fill="#ffff00"/><rect x="14" y="7" width="1" height="1" fill="#000000"/><rect x="0" y="8" width="1" height="1" fill="#000000"/><rect x="1" y="8" width="1" height="1" fill="#ffffff"/><rect x="2" y="8" width="1" height="1" fill="#ffff00"/><rect x="3" y="8" width="1" height="1" fill="#ffffff"/><rect x="4" y="8" width="1" height="1" fill="#ffff00"/><rect x="5" y="8" width="1" height="1" fill="#000000"/><rect x="6" y="8" width="1" height="1" fill="#ffff00"/><rect x="7" y="8" width="1" height="1" fill="#ffffff"/><rect x="8" y="8" width="1" height="1" fill="#ffff00"/><rect x="9" y="8" width="1" height="1" fill="#ffffff"/><rect x="10" y="8" width="1" height="1" fill="#ffff00"/><rect x="11" y="8" width="1" height="1" fill="#ffffff"/><rect x="12" y="8" width="1" height="1" fill="#ffff00"/><rect x="13" y="8" width="1" height="1" fill="#ffffff"/><rect x="14" y="8" width="1" height="1" fill="#000000"/><rect x="0" y="9" width="1" height="1" fill="#000000"/><rect x="1" y="9" width="1" height="1" fill="#ffff00"/><rect x="2" y="9" width="1" height="1" fill="#ffffff"/><rect x="3" y="9" width="1" height="1" fill="#ffff00"/><rect x="4" y="9" width="1" height="1" fill="#ffffff"/><rect x="5" y="9" width="6" height="1" fill="#000000"/><rect x="11" y="9" width="1" height="1" fill="#ffffff"/><rect x="12" y="9" width="1" height="1" fill="#ffff00"/><rect x="13" y="9" width="1" height="1" fill="#ffffff"/><rect x="14" y="9" width="1" height="1" fill="#000000"/><rect x="0" y="10" width="1" height="1" fill="#000000"/><rect x="1" y="10" width="1" height="1" fill="#ffffff"/><rect x="2" y="10" width="1" height="1" fill="#ffff00"/><rect x="3" y="10" width="1" height="1" fill="#ffffff"/><rect x="4" y="10" width="1" height="1" fill="#ffff00"/><rect x="5" y="10" width="1" height="1" fill="#ffffff"/><rect x="6" y="10" width="1" height="1" fill="#ffff00"/><rect x="7" y="10" width="1" height="1" fill="#ffffff"/><rect x="8" y="10" width="1" height="1" fill="#ffff00"/><rect x="9" y="10" width="1" height="1" fill="#ffffff"/><rect x="10" y="10" width="1" height="1" fill="#ffff00"/><rect x="11" y="10" width="1" height="1" fill="#ffffff"/><rect x="12" y="10" width="1" height="1" fill="#ffff00"/><rect x="13" y="10" width="1" height="1" fill="#ffffff"/><rect x="14" y="10" width="1" height="1" fill="#000000"/><rect x="0" y="11" width="1" height="1" fill="#000000"/><rect x="1" y="11" width="1" height="1" fill="#ffff00"/><rect x="2" y="11" width="1" height="1" fill="#ffffff"/><rect x="3" y="11" width="1" height="1" fill="#ffff00"/><rect x="4" y="11" width="1" height="1" fill="#ffffff"/><rect x="5" y="11" width="1" height="1" fill="#ffff00"/><rect x="6" y="11" width="1" height="1" fill="#ffffff"/><rect x="7" y="11" width="1" height="1" fill="#ffff00"/><rect x="8" y="11" width="1" height="1" fill="#ffffff"/><rect x="9" y="11" width="1" height="1" fill="#ffff00"/><rect x="10" y="11" width="1" height="1" fill="#ffffff"/><rect x="11" y="11" width="1" height="1" fill="#ffff00"/><rect x="12" y="11" width="1" height="1" fill="#ffffff"/><rect x="13" y="11" width="1" height="1" fill="#ffff00"/><rect x="14" y="11" width="1" height="1" fill="#000000"/><rect x="0" y="12" width="15" height="1" fill="#000000"/></symbol><symbol id="tb_tree" viewBox="0 0 14 12"><rect x="0" y="0" width="14" height="1" fill="#000080"/><rect x="0" y="1" width="14" height="1" fill="#000080"/><rect x="0" y="2" width="1" height="1" fill="#000080"/><rect x="1" y="2" width="4" height="1" fill="#ffffff"/><rect x="5" y="2" width="1" height="1" fill="#000080"/><rect x="6" y="2" width="7" height="1" fill="#c0c0c0"/><rect x="13" y="2" width="1" height="1" fill="#000080"/><rect x="0" y="3" width="1" height="1" fill="#000080"/><rect x="1" y="3" width="4" height="1" fill="#ffffff"/><rect x="5" y="3" width="1" height="1" fill="#000080"/><rect x="6" y="3" width="7" height="1" fill="#c0c0c0"/><rect x="13" y="3" width="1" height="1" fill="#000080"/><rect x="0" y="4" width="1" height="1" fill="#000080"/><rect x="1" y="4" width="1" height="1" fill="#ffffff"/><rect x="2" y="4" width="2" height="1" fill="#000000"/><rect x="4" y="4" width="1" height="1" fill="#ffffff"/><rect x="5" y="4" width="1" height="1" fill="#000080"/><rect x="6" y="4" width="3" height="1" fill="#c0c0c0"/><rect x="9" y="4" width="1" height="1" fill="#000000"/><rect x="10" y="4" width="3" height="1" fill="#c0c0c0"/><rect x="13" y="4" width="1" height="1" fill="#000080"/><rect x="0" y="5" width="1" height="1" fill="#000080"/><rect x="1" y="5" width="4" height="1" fill="#ffffff"/><rect x="5" y="5" width="1" height="1" fill="#000080"/><rect x="6" y="5" width="2" height="1" fill="#c0c0c0"/><rect x="8" y="5" width="2" height="1" fill="#000000"/><rect x="10" y="5" width="3" height="1" fill="#c0c0c0"/><rect x="13" y="5" width="1" height="1" fill="#000080"/><rect x="0" y="6" width="1" height="1" fill="#000080"/><rect x="1" y="6" width="1" height="1" fill="#ffffff"/><rect x="2" y="6" width="2" height="1" fill="#000000"/><rect x="4" y="6" width="1" height="1" fill="#ffffff"/><rect x="5" y="6" width="1" height="1" fill="#000080"/><rect x="6" y="6" width="1" height="1" fill="#c0c0c0"/><rect x="7" y="6" width="3" height="1" fill="#000000"/><rect x="10" y="6" width="3" height="1" fill="#c0c0c0"/><rect x="13" y="6" width="1" height="1" fill="#000080"/><rect x="0" y="7" width="1" height="1" fill="#000080"/><rect x="1" y="7" width="4" height="1" fill="#ffffff"/><rect x="5" y="7" width="1" height="1" fill="#000080"/><rect x="6" y="7" width="2" height="1" fill="#c0c0c0"/><rect x="8" y="7" width="2" height="1" fill="#000000"/><rect x="10" y="7" width="3" height="1" fill="#c0c0c0"/><rect x="13" y="7" width="1" height="1" fill="#000080"/><rect x="0" y="8" width="1" height="1" fill="#000080"/><rect x="1" y="8" width="1" height="1" fill="#ffffff"/><rect x="2" y="8" width="2" height="1" fill="#000000"/><rect x="4" y="8" width="1" height="1" fill="#ffffff"/><rect x="5" y="8" width="1" height="1" fill="#000080"/><rect x="6" y="8" width="3" height="1" fill="#c0c0c0"/><rect x="9" y="8" width="1" height="1" fill="#000000"/><rect x="10" y="8" width="3" height="1" fill="#c0c0c0"/><rect x="13" y="8" width="1" height="1" fill="#000080"/><rect x="0" y="9" width="1" height="1" fill="#000080"/><rect x="1" y="9" width="4" height="1" fill="#ffffff"/><rect x="5" y="9" width="1" height="1" fill="#000080"/><rect x="6" y="9" width="7" height="1" fill="#c0c0c0"/><rect x="13" y="9" width="1" height="1" fill="#000080"/><rect x="0" y="10" width="1" height="1" fill="#000080"/><rect x="1" y="10" width="4" height="1" fill="#ffffff"/><rect x="5" y="10" width="1" height="1" fill="#000080"/><rect x="6" y="10" width="7" height="1" fill="#c0c0c0"/><rect x="13" y="10" width="1" height="1" fill="#000080"/><rect x="0" y="11" width="14" height="1" fill="#000080"/></symbol><symbol id="tb_tree2" viewBox="0 0 14 12"><rect x="0" y="0" width="14" height="1" fill="#000080"/><rect x="0" y="1" width="14" height="1" fill="#000080"/><rect x="0" y="2" width="1" height="1" fill="#000080"/><rect x="1" y="2" width="7" height="1" fill="#c0c0c0"/><rect x="8" y="2" width="1" height="1" fill="#000080"/><rect x="9" y="2" width="4" height="1" fill="#ffffff"/><rect x="13" y="2" width="1" height="1" fill="#000080"/><rect x="0" y="3" width="1" height="1" fill="#000080"/><rect x="1" y="3" width="7" height="1" fill="#c0c0c0"/><rect x="8" y="3" width="1" height="1" fill="#000080"/><rect x="9" y="3" width="4" height="1" fill="#ffffff"/><rect x="13" y="3" width="1" height="1" fill="#000080"/><rect x="0" y="4" width="1" height="1" fill="#000080"/><rect x="1" y="4" width="3" height="1" fill="#c0c0c0"/><rect x="4" y="4" width="1" height="1" fill="#000000"/><rect x="5" y="4" width="3" height="1" fill="#c0c0c0"/><rect x="8" y="4" width="1" height="1" fill="#000080"/><rect x="9" y="4" width="1" height="1" fill="#ffffff"/><rect x="10" y="4" width="2" height="1" fill="#000000"/><rect x="12" y="4" width="1" height="1" fill="#ffffff"/><rect x="13" y="4" width="1" height="1" fill="#000080"/><rect x="0" y="5" width="1" height="1" fill="#000080"/><rect x="1" y="5" width="3" height="1" fill="#c0c0c0"/><rect x="4" y="5" width="2" height="1" fill="#000000"/><rect x="6" y="5" width="2" height="1" fill="#c0c0c0"/><rect x="8" y="5" width="1" height="1" fill="#000080"/><rect x="9" y="5" width="4" height="1" fill="#ffffff"/><rect x="13" y="5" width="1" height="1" fill="#000080"/><rect x="0" y="6" width="1" height="1" fill="#000080"/><rect x="1" y="6" width="3" height="1" fill="#c0c0c0"/><rect x="4" y="6" width="3" height="1" fill="#000000"/><rect x="7" y="6" width="1" height="1" fill="#c0c0c0"/><rect x="8" y="6" width="1" height="1" fill="#000080"/><rect x="9" y="6" width="1" height="1" fill="#ffffff"/><rect x="10" y="6" width="2" height="1" fill="#000000"/><rect x="12" y="6" width="1" height="1" fill="#ffffff"/><rect x="13" y="6" width="1" height="1" fill="#000080"/><rect x="0" y="7" width="1" height="1" fill="#000080"/><rect x="1" y="7" width="3" height="1" fill="#c0c0c0"/><rect x="4" y="7" width="2" height="1" fill="#000000"/><rect x="6" y="7" width="2" height="1" fill="#c0c0c0"/><rect x="8" y="7" width="1" height="1" fill="#000080"/><rect x="9" y="7" width="4" height="1" fill="#ffffff"/><rect x="13" y="7" width="1" height="1" fill="#000080"/><rect x="0" y="8" width="1" height="1" fill="#000080"/><rect x="1" y="8" width="3" height="1" fill="#c0c0c0"/><rect x="4" y="8" width="1" height="1" fill="#000000"/><rect x="5" y="8" width="3" height="1" fill="#c0c0c0"/><rect x="8" y="8" width="1" height="1" fill="#000080"/><rect x="9" y="8" width="1" height="1" fill="#ffffff"/><rect x="10" y="8" width="2" height="1" fill="#000000"/><rect x="12" y="8" width="1" height="1" fill="#ffffff"/><rect x="13" y="8" width="1" height="1" fill="#000080"/><rect x="0" y="9" width="1" height="1" fill="#000080"/><rect x="1" y="9" width="7" height="1" fill="#c0c0c0"/><rect x="8" y="9" width="1" height="1" fill="#000080"/><rect x="9" y="9" width="4" height="1" fill="#ffffff"/><rect x="13" y="9" width="1" height="1" fill="#000080"/><rect x="0" y="10" width="1" height="1" fill="#000080"/><rect x="1" y="10" width="7" height="1" fill="#c0c0c0"/><rect x="8" y="10" width="1" height="1" fill="#000080"/><rect x="9" y="10" width="4" height="1" fill="#ffffff"/><rect x="13" y="10" width="1" height="1" fill="#000080"/><rect x="0" y="11" width="14" height="1" fill="#000080"/></symbol><symbol id="tb_export" viewBox="0 0 15 14"><rect x="0" y="0" width="9" height="1" fill="#000000"/><rect x="0" y="1" width="1" height="1" fill="#000000"/><rect x="1" y="1" width="7" height="1" fill="#ffffff"/><rect x="8" y="1" width="2" height="1" fill="#000000"/><rect x="0" y="2" width="1" height="1" fill="#000000"/><rect x="1" y="2" width="7" height="1" fill="#ffffff"/><rect x="8" y="2" width="1" height="1" fill="#000000"/><rect x="9" y="2" width="1" height="1" fill="#ffffff"/><rect x="10" y="2" width="1" height="1" fill="#000000"/><rect x="0" y="3" width="1" height="1" fill="#000000"/><rect x="1" y="3" width="1" height="1" fill="#ffffff"/><rect x="2" y="3" width="2" height="1" fill="#000080"/><rect x="4" y="3" width="4" height="1" fill="#ffffff"/><rect x="8" y="3" width="4" height="1" fill="#000000"/><rect x="0" y="4" width="1" height="1" fill="#000000"/><rect x="1" y="4" width="1" height="1" fill="#ffffff"/><rect x="2" y="4" width="2" height="1" fill="#000080"/><rect x="4" y="4" width="1" height="1" fill="#ffffff"/><rect x="5" y="4" width="4" height="1" fill="#000080"/><rect x="9" y="4" width="2" height="1" fill="#ffffff"/><rect x="11" y="4" width="1" height="1" fill="#000000"/><rect x="0" y="5" width="1" height="1" fill="#000000"/><rect x="1" y="5" width="10" height="1" fill="#ffffff"/><rect x="11" y="5" width="1" height="1" fill="#000000"/><rect x="0" y="6" width="1" height="1" fill="#000000"/><rect x="1" y="6" width="1" height="1" fill="#ffffff"/><rect x="2" y="6" width="2" height="1" fill="#000080"/><rect x="4" y="6" width="6" height="1" fill="#ffffff"/><rect x="10" y="6" width="2" height="1" fill="#000000"/><rect x="0" y="7" width="1" height="1" fill="#000000"/><rect x="1" y="7" width="1" height="1" fill="#ffffff"/><rect x="2" y="7" width="2" height="1" fill="#000080"/><rect x="4" y="7" width="1" height="1" fill="#ffffff"/><rect x="5" y="7" width="5" height="1" fill="#000000"/><rect x="10" y="7" width="1" height="1" fill="#c0c0c0"/><rect x="11" y="7" width="2" height="1" fill="#000000"/><rect x="0" y="8" width="1" height="1" fill="#000000"/><rect x="1" y="8" width="4" height="1" fill="#ffffff"/><rect x="5" y="8" width="1" height="1" fill="#000000"/><rect x="6" y="8" width="6" height="1" fill="#c0c0c0"/><rect x="12" y="8" width="2" height="1" fill="#000000"/><rect x="0" y="9" width="1" height="1" fill="#000000"/><rect x="1" y="9" width="1" height="1" fill="#ffffff"/><rect x="2" y="9" width="2" height="1" fill="#000080"/><rect x="4" y="9" width="1" height="1" fill="#ffffff"/><rect x="5" y="9" width="1" height="1" fill="#000000"/><rect x="6" y="9" width="7" height="1" fill="#c0c0c0"/><rect x="13" y="9" width="1" height="1" fill="#000000"/><rect x="0" y="10" width="1" height="1" fill="#000000"/><rect x="1" y="10" width="1" height="1" fill="#ffffff"/><rect x="2" y="10" width="2" height="1" fill="#000080"/><rect x="4" y="10" width="1" height="1" fill="#ffffff"/><rect x="5" y="10" width="1" height="1" fill="#000000"/><rect x="6" y="10" width="6" height="1" fill="#c0c0c0"/><rect x="12" y="10" width="2" height="1" fill="#000000"/><rect x="0" y="11" width="1" height="1" fill="#000000"/><rect x="1" y="11" width="4" height="1" fill="#ffffff"/><rect x="5" y="11" width="5" height="1" fill="#000000"/><rect x="10" y="11" width="1" height="1" fill="#c0c0c0"/><rect x="11" y="11" width="2" height="1" fill="#000000"/><rect x="0" y="12" width="1" height="1" fill="#000000"/><rect x="1" y="12" width="9" height="1" fill="#ffffff"/><rect x="10" y="12" width="2" height="1" fill="#000000"/><rect x="0" y="13" width="12" height="1" fill="#000000"/></symbol><symbol id="tb_help" viewBox="0 0 15 15"><rect x="7" y="0" width="5" height="1" fill="#000000"/><rect x="6" y="1" width="1" height="1" fill="#000000"/><rect x="7" y="1" width="2" height="1" fill="#ffffff"/><rect x="9" y="1" width="3" height="1" fill="#ffff00"/><rect x="12" y="1" width="1" height="1" fill="#000000"/><rect x="5" y="2" width="1" height="1" fill="#000000"/><rect x="6" y="2" width="1" height="1" fill="#ffffff"/><rect x="7" y="2" width="6" height="1" fill="#ffff00"/><rect x="13" y="2" width="1" height="1" fill="#000000"/><rect x="4" y="3" width="1" height="1" fill="#000000"/><rect x="5" y="3" width="2" height="1" fill="#ffff00"/><rect x="7" y="3" width="4" height="1" fill="#000000"/><rect x="11" y="3" width="2" height="1" fill="#ffff00"/><rect x="13" y="3" width="1" height="1" fill="#000000"/><rect x="0" y="4" width="5" height="1" fill="#000000"/><rect x="5" y="4" width="1" height="1" fill="#ffff00"/><rect x="6" y="4" width="1" height="1" fill="#000000"/><rect x="10" y="4" width="1" height="1" fill="#000000"/><rect x="11" y="4" width="2" height="1" fill="#ffff00"/><rect x="13" y="4" width="1" height="1" fill="#000000"/><rect x="0" y="5" width="1" height="1" fill="#000000"/><rect x="1" y="5" width="4" height="1" fill="#ffffff"/><rect x="5" y="5" width="2" height="1" fill="#000000"/><rect x="9" y="5" width="1" height="1" fill="#000000"/><rect x="10" y="5" width="3" height="1" fill="#ffff00"/><rect x="13" y="5" width="1" height="1" fill="#000000"/><rect x="0" y="6" width="1" height="1" fill="#000000"/><rect x="1" y="6" width="5" height="1" fill="#ffffff"/><rect x="6" y="6" width="1" height="1" fill="#000000"/><rect x="8" y="6" width="1" height="1" fill="#000000"/><rect x="9" y="6" width="3" height="1" fill="#ffff00"/><rect x="12" y="6" width="1" height="1" fill="#000000"/><rect x="0" y="7" width="1" height="1" fill="#000000"/><rect x="1" y="7" width="1" height="1" fill="#ffffff"/><rect x="2" y="7" width="4" height="1" fill="#808080"/><rect x="6" y="7" width="2" height="1" fill="#000000"/><rect x="8" y="7" width="3" height="1" fill="#ffff00"/><rect x="11" y="7" width="1" height="1" fill="#000000"/><rect x="0" y="8" width="1" height="1" fill="#000000"/><rect x="1" y="8" width="5" height="1" fill="#ffffff"/><rect x="6" y="8" width="1" height="1" fill="#000000"/><rect x="7" y="8" width="2" height="1" fill="#ffff00"/><rect x="9" y="8" width="2" height="1" fill="#000000"/><rect x="0" y="9" width="1" height="1" fill="#000000"/><rect x="1" y="9" width="1" height="1" fill="#ffffff"/><rect x="2" y="9" width="4" height="1" fill="#808080"/><rect x="6" y="9" width="1" height="1" fill="#ffffff"/><rect x="7" y="9" width="3" height="1" fill="#000000"/><rect x="0" y="10" width="1" height="1" fill="#000000"/><rect x="1" y="10" width="6" height="1" fill="#ffffff"/><rect x="7" y="10" width="1" height="1" fill="#000000"/><rect x="0" y="11" width="1" height="1" fill="#000000"/><rect x="1" y="11" width="1" height="1" fill="#ffffff"/><rect x="2" y="11" width="4" height="1" fill="#808080"/><rect x="6" y="11" width="1" height="1" fill="#ffffff"/><rect x="7" y="11" width="4" height="1" fill="#000000"/><rect x="0" y="12" width="1" height="1" fill="#000000"/><rect x="1" y="12" width="6" height="1" fill="#ffffff"/><rect x="7" y="12" width="1" height="1" fill="#000000"/><rect x="8" y="12" width="3" height="1" fill="#ffff00"/><rect x="11" y="12" width="1" height="1" fill="#000000"/><rect x="0" y="13" width="1" height="1" fill="#000000"/><rect x="1" y="13" width="6" height="1" fill="#ffffff"/><rect x="7" y="13" width="1" height="1" fill="#000000"/><rect x="8" y="13" width="2" height="1" fill="#ffff00"/><rect x="10" y="13" width="1" height="1" fill="#000000"/><rect x="0" y="14" width="10" height="1" fill="#000000"/></symbol><symbol id="cursor" viewBox="0 0 13 16"><rect x="0" y="0" width="1" height="1" fill="#000000"/><rect x="1" y="0" width="3" height="1" fill="#ffffff"/><rect x="4" y="0" width="1" height="1" fill="#000000"/><rect x="0" y="1" width="1" height="1" fill="#000000"/><rect x="1" y="1" width="4" height="1" fill="#ffffff"/><rect x="5" y="1" width="1" height="1" fill="#000000"/><rect x="0" y="2" width="1" height="1" fill="#000000"/><rect x="1" y="2" width="5" height="1" fill="#ffffff"/><rect x="6" y="2" width="1" height="1" fill="#000000"/><rect x="0" y="3" width="1" height="1" fill="#000000"/><rect x="1" y="3" width="6" height="1" fill="#ffffff"/><rect x="7" y="3" width="1" height="1" fill="#000000"/><rect x="0" y="4" width="1" height="1" fill="#000000"/><rect x="1" y="4" width="7" height="1" fill="#ffffff"/><rect x="8" y="4" width="1" height="1" fill="#000000"/><rect x="0" y="5" width="1" height="1" fill="#000000"/><rect x="1" y="5" width="8" height="1" fill="#ffffff"/><rect x="9" y="5" width="1" height="1" fill="#000000"/><rect x="0" y="6" width="1" height="1" fill="#000000"/><rect x="1" y="6" width="9" height="1" fill="#ffffff"/><rect x="10" y="6" width="1" height="1" fill="#000000"/><rect x="0" y="7" width="1" height="1" fill="#000000"/><rect x="1" y="7" width="10" height="1" fill="#ffffff"/><rect x="11" y="7" width="1" height="1" fill="#000000"/><rect x="0" y="8" width="1" height="1" fill="#000000"/><rect x="1" y="8" width="6" height="1" fill="#ffffff"/><rect x="7" y="8" width="6" height="1" fill="#000000"/><rect x="0" y="9" width="1" height="1" fill="#000000"/><rect x="1" y="9" width="3" height="1" fill="#ffffff"/><rect x="4" y="9" width="1" height="1" fill="#000000"/><rect x="5" y="9" width="2" height="1" fill="#ffffff"/><rect x="7" y="9" width="1" height="1" fill="#000000"/><rect x="0" y="10" width="1" height="1" fill="#000000"/><rect x="1" y="10" width="2" height="1" fill="#ffffff"/><rect x="3" y="10" width="2" height="1" fill="#000000"/><rect x="5" y="10" width="2" height="1" fill="#ffffff"/><rect x="7" y="10" width="1" height="1" fill="#000000"/><rect x="0" y="11" width="1" height="1" fill="#000000"/><rect x="1" y="11" width="1" height="1" fill="#ffffff"/><rect x="2" y="11" width="1" height="1" fill="#000000"/><rect x="5" y="11" width="1" height="1" fill="#000000"/><rect x="6" y="11" width="2" height="1" fill="#ffffff"/><rect x="8" y="11" width="1" height="1" fill="#000000"/><rect x="0" y="12" width="2" height="1" fill="#000000"/><rect x="5" y="12" width="1" height="1" fill="#000000"/><rect x="6" y="12" width="2" height="1" fill="#ffffff"/><rect x="8" y="12" width="1" height="1" fill="#000000"/><rect x="0" y="13" width="1" height="1" fill="#000000"/><rect x="6" y="13" width="1" height="1" fill="#000000"/><rect x="7" y="13" width="2" height="1" fill="#ffffff"/><rect x="9" y="13" width="1" height="1" fill="#000000"/><rect x="6" y="14" width="1" height="1" fill="#000000"/><rect x="7" y="14" width="2" height="1" fill="#ffffff"/><rect x="9" y="14" width="1" height="1" fill="#000000"/><rect x="7" y="15" width="2" height="1" fill="#000000"/></symbol><symbol id="titleicon" viewBox="0 0 16 16"><rect x="7" y="7" width="1" height="1" fill="#000000"/><rect x="8" y="7" width="2" height="1" fill="#000080"/><rect x="10" y="7" width="1" height="1" fill="#ffffff"/><rect x="11" y="7" width="1" height="1" fill="#000080"/><rect x="12" y="7" width="1" height="1" fill="#ffffff"/><rect x="13" y="7" width="1" height="1" fill="#000080"/><rect x="14" y="7" width="1" height="1" fill="#000000"/><rect x="7" y="8" width="1" height="1" fill="#000000"/><rect x="8" y="8" width="6" height="1" fill="#ffffff"/><rect x="14" y="8" width="1" height="1" fill="#000000"/><rect x="3" y="9" width="4" height="1" fill="#ffff00"/><rect x="7" y="9" width="1" height="1" fill="#000000"/><rect x="8" y="9" width="3" height="1" fill="#ffffff"/><rect x="11" y="9" width="1" height="1" fill="#800080"/><rect x="12" y="9" width="2" height="1" fill="#ffffff"/><rect x="14" y="9" width="1" height="1" fill="#000000"/><rect x="3" y="10" width="4" height="1" fill="#ffff00"/><rect x="7" y="10" width="1" height="1" fill="#000000"/><rect x="8" y="10" width="1" height="1" fill="#ffffff"/><rect x="9" y="10" width="1" height="1" fill="#ff0000"/><rect x="10" y="10" width="1" height="1" fill="#ffffff"/><rect x="11" y="10" width="1" height="1" fill="#800080"/><rect x="12" y="10" width="2" height="1" fill="#ffffff"/><rect x="14" y="10" width="1" height="1" fill="#000000"/><rect x="3" y="11" width="4" height="1" fill="#ffff00"/><rect x="7" y="11" width="1" height="1" fill="#000000"/><rect x="8" y="11" width="3" height="1" fill="#ffffff"/><rect x="11" y="11" width="1" height="1" fill="#800080"/><rect x="12" y="11" width="2" height="1" fill="#ffffff"/><rect x="14" y="11" width="1" height="1" fill="#000000"/><rect x="3" y="12" width="4" height="1" fill="#ffff00"/><rect x="7" y="12" width="1" height="1" fill="#000000"/><rect x="8" y="12" width="3" height="1" fill="#ffffff"/><rect x="11" y="12" width="1" height="1" fill="#800080"/><rect x="12" y="12" width="2" height="1" fill="#ffffff"/><rect x="14" y="12" width="1" height="1" fill="#000000"/><rect x="3" y="13" width="4" height="1" fill="#ffff00"/><rect x="7" y="13" width="8" height="1" fill="#000000"/><rect x="3" y="14" width="4" height="1" fill="#ffff00"/><rect x="7" y="14" width="1" height="1" fill="#000000"/><rect x="4" y="15" width="3" height="1" fill="#000000"/></symbol></defs></svg><div style="left:0px;top:1px;width:798px;height:1px;background:#ffffff"></div><div style="left:1px;top:1px;width:1px;height:568px;background:#ffffff"></div><div style="left:3px;top:3px;width:793px;height:18px;background:linear-gradient(90deg,#808080,#c0c0c0)"></div><svg class="ic" style="left:5px;top:4px" width="16" height="16" viewBox="0 0 16 16"><use href="#titleicon"/></svg><span class="t b f" style="left:21.50px;top:6px;letter-spacing:0.413px">Editor de objetos de directiva de grupo</span><div style="left:744px;top:5px;width:16px;height:14px;background:#d4d0c8"></div><div style="left:744px;top:5px;width:16px;height:1px;background:#ffffff"></div><div style="left:744px;top:5px;width:1px;height:14px;background:#ffffff"></div><div style="left:744px;top:18px;width:16px;height:1px;background:#404040"></div><div style="left:759px;top:5px;width:1px;height:14px;background:#404040"></div><div style="left:745px;top:17px;width:14px;height:1px;background:#808080"></div><div style="left:758px;top:6px;width:1px;height:12px;background:#808080"></div><div style="left:760px;top:5px;width:16px;height:14px;background:#d4d0c8"></div><div style="left:760px;top:5px;width:16px;height:1px;background:#ffffff"></div><div style="left:760px;top:5px;width:1px;height:14px;background:#ffffff"></div><div style="left:760px;top:18px;width:16px;height:1px;background:#404040"></div><div style="left:775px;top:5px;width:1px;height:14px;background:#404040"></div><div style="left:761px;top:17px;width:14px;height:1px;background:#808080"></div><div style="left:774px;top:6px;width:1px;height:12px;background:#808080"></div><div style="left:778px;top:5px;width:16px;height:14px;background:#d4d0c8"></div><div style="left:778px;top:5px;width:16px;height:1px;background:#ffffff"></div><div style="left:778px;top:5px;width:1px;height:14px;background:#ffffff"></div><div style="left:778px;top:18px;width:16px;height:1px;background:#404040"></div><div style="left:793px;top:5px;width:1px;height:14px;background:#404040"></div><div style="left:779px;top:17px;width:14px;height:1px;background:#808080"></div><div style="left:792px;top:6px;width:1px;height:12px;background:#808080"></div><div style="left:748px;top:14px;width:6px;height:2px;background:#000"></div><div style="left:763px;top:7px;width:9px;height:9px;border:1px solid #000;border-top:2px solid #000;box-sizing:border-box"></div><svg class="ic" style="left:782px;top:8px" width="8" height="7" viewBox="0 0 8 7"><path d="M0 0h2v1h-2zM6 0h2v1h-2zM1 1h2v1h-2zM5 1h2v1h-2zM2 2h4v1h-4zM3 3h2v1h-2zM2 4h4v1h-4zM1 5h2v1h-2zM5 5h2v1h-2zM0 6h2v1h-2zM6 6h2v1h-2z" fill="#000"/></svg><div style="left:3px;top:22px;width:793px;height:1px;background:#808080"></div><div style="left:3px;top:22px;width:1px;height:50px;background:#808080"></div><div style="left:4px;top:23px;width:791px;height:1px;background:#ffffff"></div><div style="left:4px;top:23px;width:1px;height:48px;background:#ffffff"></div><div style="left:4px;top:46px;width:791px;height:1px;background:#808080"></div><div style="left:4px;top:47px;width:791px;height:1px;background:#ffffff"></div><div style="left:4px;top:70px;width:791px;height:1px;background:#808080"></div><div style="left:3px;top:71px;width:793px;height:1px;background:#ffffff"></div><div style="left:794px;top:23px;width:1px;height:48px;background:#808080"></div><div style="left:795px;top:22px;width:1px;height:50px;background:#ffffff"></div><span class="t" style="left:13.00px;top:29px;letter-spacing:-0.167px">Arc<u>h</u>ivo</span><span class="t" style="left:64.70px;top:29px;letter-spacing:-0.500px"><u>A</u>cci&oacute;n</span><span class="t" style="left:111.00px;top:29px;letter-spacing:0.000px"><u>V</u>er</span><span class="t" style="left:143.60px;top:29px;letter-spacing:-0.100px">Ay<u>u</u>da</span><svg class="ic" style="left:10px;top:54px" width="12" height="10" viewBox="0 0 12 10"><use href="#tb_back"/></svg><svg class="ic" style="left:33px;top:54px" width="13" height="11" viewBox="0 0 13 11"><use href="#tb_fwd"/></svg><div style="left:54px;top:50px;width:1px;height:18px;background:#808080"></div><div style="left:55px;top:50px;width:1px;height:18px;background:#ffffff"></div><div style="left:108px;top:50px;width:1px;height:18px;background:#808080"></div><div style="left:109px;top:50px;width:1px;height:18px;background:#ffffff"></div><div style="left:139px;top:50px;width:1px;height:18px;background:#808080"></div><div style="left:140px;top:50px;width:1px;height:18px;background:#ffffff"></div><svg class="ic" style="left:63px;top:52px" width="15" height="13" viewBox="0 0 15 13"><use href="#tb_up"/></svg><div style="left:82px;top:48px;width:23px;height:22px;background-image:conic-gradient(#fff 25%,#d4d0c8 0 50%,#fff 0 75%,#d4d0c8 0);background-size:2px 2px;"></div><div style="left:82px;top:48px;width:23px;height:1px;background:#808080"></div><div style="left:82px;top:48px;width:1px;height:22px;background:#808080"></div><div style="left:82px;top:69px;width:23px;height:1px;background:#ffffff"></div><div style="left:104px;top:48px;width:1px;height:22px;background:#ffffff"></div><svg class="ic" style="left:87px;top:53px" width="14" height="12" viewBox="0 0 14 12"><use href="#tb_tree"/></svg><svg class="ic" style="left:118px;top:52px" width="15" height="14" viewBox="0 0 15 14"><use href="#tb_export"/></svg><svg class="ic" style="left:148px;top:51px" width="15" height="15" viewBox="0 0 15 15"><use href="#tb_help"/></svg><svg class="ic" style="left:171px;top:53px" width="14" height="12" viewBox="0 0 14 12"><use href="#tb_tree2"/></svg><div style="left:3px;top:74px;width:194px;height:473px;background:#fff"></div><div style="left:3px;top:74px;width:194px;height:1px;background:#808080"></div><div style="left:3px;top:74px;width:1px;height:473px;background:#808080"></div><div style="left:3px;top:546px;width:194px;height:1px;background:#ffffff"></div><div style="left:196px;top:74px;width:1px;height:473px;background:#ffffff"></div><div style="left:4px;top:75px;width:192px;height:1px;background:#404040"></div><div style="left:4px;top:75px;width:1px;height:471px;background:#404040"></div><div style="left:4px;top:545px;width:192px;height:1px;background:#d4d0c8"></div><div style="left:195px;top:75px;width:1px;height:471px;background:#d4d0c8"></div><div style="left:16px;top:92px;width:1px;height:72px;background-image:linear-gradient(#808080 50%,transparent 0);background-size:1px 2px;background-position:0 0"></div><div style="left:35px;top:108px;width:1px;height:40px;background-image:linear-gradient(#808080 50%,transparent 0);background-size:1px 2px;"></div><div style="left:35px;top:172px;width:1px;height:40px;background-image:linear-gradient(#808080 50%,transparent 0);background-size:1px 2px;"></div><svg class="ic" style="left:8px;top:76px" width="16" height="15" viewBox="0 0 16 15"><use href="#scroll"/></svg><span class="t" style="left:27.60px;top:78px;letter-spacing:-0.152px">Directiva Equipo local</span><div style="left:22px;top:100px;width:5px;height:1px;background-image:linear-gradient(90deg,#808080 50%,transparent 0);background-size:2px 1px;"></div><div style="left:12px;top:96px;width:9px;height:9px;background:#fff;border:1px solid #808080;box-sizing:border-box"></div><div style="left:14px;top:100px;width:5px;height:1px;background:#000"></div><svg class="ic" style="left:27px;top:92px" width="16" height="16" viewBox="0 0 16 16"><use href="#computer"/></svg><span class="t" style="left:47.60px;top:94px;letter-spacing:-0.148px">Configuraci&oacute;n del equipo</span><div style="left:41px;top:116px;width:5px;height:1px;background-image:linear-gradient(90deg,#808080 50%,transparent 0);background-size:2px 1px;"></div><div style="left:31px;top:112px;width:9px;height:9px;background:#fff;border:1px solid #808080;box-sizing:border-box"></div><div style="left:33px;top:116px;width:5px;height:1px;background:#000"></div><div style="left:35px;top:114px;width:1px;height:5px;background:#000"></div><svg class="ic" style="left:47px;top:109px" width="15" height="13" viewBox="0 0 15 13"><use href="#folder"/></svg><span class="t" style="left:66.60px;top:110px;letter-spacing:-0.067px">Configuraci&oacute;n de software</span><div style="left:41px;top:132px;width:5px;height:1px;background-image:linear-gradient(90deg,#808080 50%,transparent 0);background-size:2px 1px;"></div><div style="left:31px;top:128px;width:9px;height:9px;background:#fff;border:1px solid #808080;box-sizing:border-box"></div><div style="left:33px;top:132px;width:5px;height:1px;background:#000"></div><div style="left:35px;top:130px;width:1px;height:5px;background:#000"></div><svg class="ic" style="left:47px;top:125px" width="15" height="13" viewBox="0 0 15 13"><use href="#folder"/></svg><span class="t" style="left:66.60px;top:126px;letter-spacing:-0.157px">Configuraci&oacute;n de Windows</span><div style="left:41px;top:148px;width:5px;height:1px;background-image:linear-gradient(90deg,#808080 50%,transparent 0);background-size:2px 1px;"></div><div style="left:31px;top:144px;width:9px;height:9px;background:#fff;border:1px solid #808080;box-sizing:border-box"></div><div style="left:33px;top:148px;width:5px;height:1px;background:#000"></div><div style="left:35px;top:146px;width:1px;height:5px;background:#000"></div><div style="left:65px;top:140px;width:123px;height:16px;background:#d4d0c8"></div><svg class="ic" style="left:45px;top:141px" width="17" height="13" viewBox="0 0 17 13"><use href="#folderopen"/></svg><span class="t" style="left:65.60px;top:142px;letter-spacing:-0.132px">Plantillas administrativas</span><div style="left:22px;top:164px;width:5px;height:1px;background-image:linear-gradient(90deg,#808080 50%,transparent 0);background-size:2px 1px;"></div><div style="left:12px;top:160px;width:9px;height:9px;background:#fff;border:1px solid #808080;box-sizing:border-box"></div><div style="left:14px;top:164px;width:5px;height:1px;background:#000"></div><svg class="ic" style="left:27px;top:156px" width="16" height="15" viewBox="0 0 16 15"><use href="#user"/></svg><span class="t" style="left:47.60px;top:158px;letter-spacing:-0.148px">Configuraci&oacute;n de usuario</span><div style="left:41px;top:180px;width:5px;height:1px;background-image:linear-gradient(90deg,#808080 50%,transparent 0);background-size:2px 1px;"></div><div style="left:31px;top:176px;width:9px;height:9px;background:#fff;border:1px solid #808080;box-sizing:border-box"></div><div style="left:33px;top:180px;width:5px;height:1px;background:#000"></div><div style="left:35px;top:178px;width:1px;height:5px;background:#000"></div><svg class="ic" style="left:47px;top:173px" width="15" height="13" viewBox="0 0 15 13"><use href="#folder"/></svg><span class="t" style="left:66.60px;top:174px;letter-spacing:-0.067px">Configuraci&oacute;n de software</span><div style="left:41px;top:196px;width:5px;height:1px;background-image:linear-gradient(90deg,#808080 50%,transparent 0);background-size:2px 1px;"></div><div style="left:31px;top:192px;width:9px;height:9px;background:#fff;border:1px solid #808080;box-sizing:border-box"></div><div style="left:33px;top:196px;width:5px;height:1px;background:#000"></div><div style="left:35px;top:194px;width:1px;height:5px;background:#000"></div><svg class="ic" style="left:47px;top:189px" width="15" height="13" viewBox="0 0 15 13"><use href="#folder"/></svg><span class="t" style="left:66.60px;top:190px;letter-spacing:-0.157px">Configuraci&oacute;n de Windows</span><div style="left:41px;top:212px;width:5px;height:1px;background-image:linear-gradient(90deg,#808080 50%,transparent 0);background-size:2px 1px;"></div><div style="left:31px;top:208px;width:9px;height:9px;background:#fff;border:1px solid #808080;box-sizing:border-box"></div><div style="left:33px;top:212px;width:5px;height:1px;background:#000"></div><div style="left:35px;top:210px;width:1px;height:5px;background:#000"></div><svg class="ic" style="left:47px;top:205px" width="15" height="13" viewBox="0 0 15 13"><use href="#folder"/></svg><span class="t" style="left:65.60px;top:206px;letter-spacing:-0.132px">Plantillas administrativas</span><div style="left:5px;top:529px;width:190px;height:16px;background-image:conic-gradient(#fff 25%,#d4d0c8 0 50%,#fff 0 75%,#d4d0c8 0);background-size:2px 2px;"></div><div style="left:5px;top:529px;width:16px;height:16px;background:#d4d0c8"></div><div style="left:5px;top:529px;width:16px;height:1px;background:#d4d0c8"></div><div style="left:5px;top:529px;width:1px;height:16px;background:#d4d0c8"></div><div style="left:5px;top:544px;width:16px;height:1px;background:#404040"></div><div style="left:20px;top:529px;width:1px;height:16px;background:#404040"></div><div style="left:6px;top:530px;width:14px;height:1px;background:#ffffff"></div><div style="left:6px;top:530px;width:1px;height:14px;background:#ffffff"></div><div style="left:6px;top:543px;width:14px;height:1px;background:#808080"></div><div style="left:19px;top:530px;width:1px;height:14px;background:#808080"></div><div style="left:13px;top:533px;width:1px;height:1px;background:#000"></div><div style="left:12px;top:534px;width:2px;height:1px;background:#000"></div><div style="left:11px;top:535px;width:3px;height:1px;background:#000"></div><div style="left:10px;top:536px;width:4px;height:1px;background:#000"></div><div style="left:11px;top:537px;width:3px;height:1px;background:#000"></div><div style="left:12px;top:538px;width:2px;height:1px;background:#000"></div><div style="left:13px;top:539px;width:1px;height:1px;background:#000"></div><div style="left:179px;top:529px;width:16px;height:16px;background:#d4d0c8"></div><div style="left:179px;top:529px;width:16px;height:1px;background:#d4d0c8"></div><div style="left:179px;top:529px;width:1px;height:16px;background:#d4d0c8"></div><div style="left:179px;top:544px;width:16px;height:1px;background:#404040"></div><div style="left:194px;top:529px;width:1px;height:16px;background:#404040"></div><div style="left:180px;top:530px;width:14px;height:1px;background:#ffffff"></div><div style="left:180px;top:530px;width:1px;height:14px;background:#ffffff"></div><div style="left:180px;top:543px;width:14px;height:1px;background:#808080"></div><div style="left:193px;top:530px;width:1px;height:14px;background:#808080"></div><div style="left:185px;top:533px;width:1px;height:1px;background:#000"></div><div style="left:185px;top:534px;width:2px;height:1px;background:#000"></div><div style="left:185px;top:535px;width:3px;height:1px;background:#000"></div><div style="left:185px;top:536px;width:4px;height:1px;background:#000"></div><div style="left:185px;top:537px;width:3px;height:1px;background:#000"></div><div style="left:185px;top:538px;width:2px;height:1px;background:#000"></div><div style="left:185px;top:539px;width:1px;height:1px;background:#000"></div><div style="left:21px;top:529px;width:152px;height:16px;background:#d4d0c8"></div><div style="left:21px;top:529px;width:152px;height:1px;background:#d4d0c8"></div><div style="left:21px;top:529px;width:1px;height:16px;background:#d4d0c8"></div><div style="left:21px;top:544px;width:152px;height:1px;background:#404040"></div><div style="left:172px;top:529px;width:1px;height:16px;background:#404040"></div><div style="left:22px;top:530px;width:150px;height:1px;background:#ffffff"></div><div style="left:22px;top:530px;width:1px;height:14px;background:#ffffff"></div><div style="left:22px;top:543px;width:150px;height:1px;background:#808080"></div><div style="left:171px;top:530px;width:1px;height:14px;background:#808080"></div><div style="left:202px;top:76px;width:592px;height:454px;background:#fff"></div><div style="left:200px;top:74px;width:596px;height:1px;background:#808080"></div><div style="left:200px;top:74px;width:1px;height:454px;background:#808080"></div><div style="left:201px;top:75px;width:594px;height:1px;background:#404040"></div><div style="left:201px;top:75px;width:1px;height:453px;background:#404040"></div><div style="left:794px;top:75px;width:1px;height:455px;background:#d4d0c8"></div><div style="left:795px;top:74px;width:1px;height:456px;background:#ffffff"></div><div style="left:202px;top:528px;width:212px;height:1px;background:#d4d0c8"></div><div style="left:202px;top:76px;width:592px;height:35px;background:#0a246a"></div><div style="left:404px;top:101px;width:390px;height:10px;background:#fff;border-top-left-radius:9px"></div><svg class="ic" style="left:213px;top:82px" width="15" height="13" viewBox="0 0 15 13"><use href="#folder"/></svg><span class="t b w" style="left:235.50px;top:82px;letter-spacing:0.468px">Plantillas administrativas</span><span class="t" style="left:206.00px;top:117px;letter-spacing:-0.161px">Seleccione un elemento para ver su</span><span class="t" style="left:207.00px;top:130px;letter-spacing:-0.273px">descripci&oacute;n.</span><div style="left:415px;top:112px;width:379px;height:16px;background:#d4d0c8"></div><div style="left:414px;top:126px;width:380px;height:1px;background:#808080"></div><div style="left:414px;top:127px;width:380px;height:1px;background:#404040"></div><div style="left:763px;top:112px;width:1px;height:15px;background:#404040"></div><div style="left:764px;top:112px;width:1px;height:15px;background:#ffffff"></div><span class="t" style="left:420.00px;top:114px;letter-spacing:-0.150px">Configuraci&oacute;n</span><svg class="ic" style="left:419px;top:129px" width="15" height="13" viewBox="0 0 15 13"><use href="#folder"/></svg><span class="t" style="left:436.00px;top:131px;letter-spacing:-0.267px">Componentes de Windows</span><svg class="ic" style="left:419px;top:146px" width="15" height="13" viewBox="0 0 15 13"><use href="#folder"/></svg><span class="t" style="left:435.00px;top:148px;letter-spacing:-0.483px">Sistema</span><svg class="ic" style="left:419px;top:163px" width="15" height="13" viewBox="0 0 15 13"><use href="#folder"/></svg><span class="t" style="left:435.00px;top:165px;letter-spacing:-0.450px">Red</span><svg class="ic" style="left:419px;top:180px" width="15" height="13" viewBox="0 0 15 13"><use href="#folder"/></svg><span class="t" style="left:435.00px;top:182px;letter-spacing:-0.089px">Impresoras</span><div style="left:414px;top:512px;width:380px;height:16px;background-image:conic-gradient(#fff 25%,#d4d0c8 0 50%,#fff 0 75%,#d4d0c8 0);background-size:2px 2px;"></div><div style="left:414px;top:512px;width:16px;height:16px;background:#d4d0c8"></div><div style="left:414px;top:512px;width:16px;height:1px;background:#d4d0c8"></div><div style="left:414px;top:512px;width:1px;height:16px;background:#d4d0c8"></div><div style="left:414px;top:527px;width:16px;height:1px;background:#404040"></div><div style="left:429px;top:512px;width:1px;height:16px;background:#404040"></div><div style="left:415px;top:513px;width:14px;height:1px;background:#ffffff"></div><div style="left:415px;top:513px;width:1px;height:14px;background:#ffffff"></div><div style="left:415px;top:526px;width:14px;height:1px;background:#808080"></div><div style="left:428px;top:513px;width:1px;height:14px;background:#808080"></div><div style="left:422px;top:516px;width:1px;height:1px;background:#000"></div><div style="left:421px;top:517px;width:2px;height:1px;background:#000"></div><div style="left:420px;top:518px;width:3px;height:1px;background:#000"></div><div style="left:419px;top:519px;width:4px;height:1px;background:#000"></div><div style="left:420px;top:520px;width:3px;height:1px;background:#000"></div><div style="left:421px;top:521px;width:2px;height:1px;background:#000"></div><div style="left:422px;top:522px;width:1px;height:1px;background:#000"></div><div style="left:778px;top:512px;width:16px;height:16px;background:#d4d0c8"></div><div style="left:778px;top:512px;width:16px;height:1px;background:#d4d0c8"></div><div style="left:778px;top:512px;width:1px;height:16px;background:#d4d0c8"></div><div style="left:778px;top:527px;width:16px;height:1px;background:#404040"></div><div style="left:793px;top:512px;width:1px;height:16px;background:#404040"></div><div style="left:779px;top:513px;width:14px;height:1px;background:#ffffff"></div><div style="left:779px;top:513px;width:1px;height:14px;background:#ffffff"></div><div style="left:779px;top:526px;width:14px;height:1px;background:#808080"></div><div style="left:792px;top:513px;width:1px;height:14px;background:#808080"></div><div style="left:784px;top:516px;width:1px;height:1px;background:#000"></div><div style="left:784px;top:517px;width:2px;height:1px;background:#000"></div><div style="left:784px;top:518px;width:3px;height:1px;background:#000"></div><div style="left:784px;top:519px;width:4px;height:1px;background:#000"></div><div style="left:784px;top:520px;width:3px;height:1px;background:#000"></div><div style="left:784px;top:521px;width:2px;height:1px;background:#000"></div><div style="left:784px;top:522px;width:1px;height:1px;background:#000"></div><div style="left:430px;top:512px;width:294px;height:16px;background:#d4d0c8"></div><div style="left:430px;top:512px;width:294px;height:1px;background:#d4d0c8"></div><div style="left:430px;top:512px;width:1px;height:16px;background:#d4d0c8"></div><div style="left:430px;top:527px;width:294px;height:1px;background:#404040"></div><div style="left:723px;top:512px;width:1px;height:16px;background:#404040"></div><div style="left:431px;top:513px;width:292px;height:1px;background:#ffffff"></div><div style="left:431px;top:513px;width:1px;height:14px;background:#ffffff"></div><div style="left:431px;top:526px;width:292px;height:1px;background:#808080"></div><div style="left:722px;top:513px;width:1px;height:14px;background:#808080"></div><div style="left:275px;top:530px;width:521px;height:1px;background:#000"></div><svg class="ic" style="left:0;top:0" width="798" height="569" viewBox="0 0 798 569"><polygon points="200,530 275,530 267,546 208,546" fill="#fff"/><rect x="200" y="530" width="1" height="2" fill="#000"/><rect x="267" y="545" width="1" height="2" fill="#000"/><rect x="329" y="545" width="1" height="2" fill="#000"/><rect x="201" y="532" width="1" height="2" fill="#000"/><rect x="268" y="543" width="1" height="2" fill="#000"/><rect x="330" y="543" width="1" height="2" fill="#000"/><rect x="202" y="534" width="1" height="2" fill="#000"/><rect x="269" y="541" width="1" height="2" fill="#000"/><rect x="331" y="541" width="1" height="2" fill="#000"/><rect x="203" y="536" width="1" height="2" fill="#000"/><rect x="270" y="539" width="1" height="2" fill="#000"/><rect x="332" y="539" width="1" height="2" fill="#000"/><rect x="204" y="538" width="1" height="2" fill="#000"/><rect x="271" y="537" width="1" height="2" fill="#000"/><rect x="333" y="537" width="1" height="2" fill="#000"/><rect x="205" y="540" width="1" height="2" fill="#000"/><rect x="272" y="535" width="1" height="2" fill="#000"/><rect x="334" y="535" width="1" height="2" fill="#000"/><rect x="206" y="542" width="1" height="2" fill="#000"/><rect x="273" y="533" width="1" height="2" fill="#000"/><rect x="335" y="533" width="1" height="2" fill="#000"/><rect x="207" y="544" width="1" height="2" fill="#000"/><rect x="274" y="531" width="1" height="2" fill="#000"/><rect x="336" y="531" width="1" height="2" fill="#000"/><rect x="271" y="537" width="1" height="2" fill="#000"/><rect x="272" y="539" width="1" height="2" fill="#000"/><rect x="273" y="541" width="1" height="2" fill="#000"/><rect x="274" y="543" width="1" height="2" fill="#000"/><rect x="275" y="545" width="1" height="2" fill="#000"/><rect x="208" y="546" width="59" height="1" fill="#404040"/><rect x="276" y="546" width="53" height="1" fill="#404040"/></svg><span class="t" style="left:212.80px;top:533px;letter-spacing:-0.087px">Extendido</span><span class="t" style="left:279.30px;top:533px;letter-spacing:-0.143px">Est&aacute;ndar</span><div style="left:3px;top:549px;width:573px;height:1px;background:#808080"></div><div style="left:3px;top:549px;width:1px;height:18px;background:#808080"></div><div style="left:3px;top:566px;width:573px;height:1px;background:#ffffff"></div><div style="left:575px;top:549px;width:1px;height:18px;background:#ffffff"></div><div style="left:578px;top:549px;width:131px;height:1px;background:#808080"></div><div style="left:578px;top:549px;width:1px;height:18px;background:#808080"></div><div style="left:578px;top:566px;width:131px;height:1px;background:#ffffff"></div><div style="left:708px;top:549px;width:1px;height:18px;background:#ffffff"></div><div style="left:711px;top:549px;width:84px;height:1px;background:#808080"></div><div style="left:711px;top:549px;width:1px;height:18px;background:#808080"></div><div style="left:711px;top:566px;width:84px;height:1px;background:#ffffff"></div><div style="left:794px;top:549px;width:1px;height:18px;background:#ffffff"></div><div style="left:220px;top:207px;width:438px;height:269px;background:#d4d0c8"></div><div style="left:220px;top:475px;width:438px;height:1px;background:#404040"></div><div style="left:657px;top:207px;width:1px;height:269px;background:#404040"></div><div style="left:221px;top:208px;width:436px;height:1px;background:#ffffff"></div><div style="left:221px;top:208px;width:1px;height:267px;background:#ffffff"></div><div style="left:221px;top:474px;width:436px;height:1px;background:#808080"></div><div style="left:656px;top:208px;width:1px;height:267px;background:#808080"></div><div style="left:223px;top:210px;width:432px;height:18px;background:linear-gradient(90deg,#0a246a,#a6caf0)"></div><span class="t b w" style="left:225.00px;top:213px;letter-spacing:0.377px">Agregar o quitar plantillas</span><div style="left:619px;top:212px;width:16px;height:14px;background:#d4d0c8"></div><div style="left:619px;top:212px;width:16px;height:1px;background:#ffffff"></div><div style="left:619px;top:212px;width:1px;height:14px;background:#ffffff"></div><div style="left:619px;top:225px;width:16px;height:1px;background:#404040"></div><div style="left:634px;top:212px;width:1px;height:14px;background:#404040"></div><div style="left:620px;top:224px;width:14px;height:1px;background:#808080"></div><div style="left:633px;top:213px;width:1px;height:12px;background:#808080"></div><div style="left:637px;top:212px;width:16px;height:14px;background:#d4d0c8"></div><div style="left:637px;top:212px;width:16px;height:1px;background:#ffffff"></div><div style="left:637px;top:212px;width:1px;height:14px;background:#ffffff"></div><div style="left:637px;top:225px;width:16px;height:1px;background:#404040"></div><div style="left:652px;top:212px;width:1px;height:14px;background:#404040"></div><div style="left:638px;top:224px;width:14px;height:1px;background:#808080"></div><div style="left:651px;top:213px;width:1px;height:12px;background:#808080"></div><svg class="ic" style="left:641px;top:215px" width="8" height="7" viewBox="0 0 8 7"><path d="M0 0h2v1h-2zM6 0h2v1h-2zM1 1h2v1h-2zM5 1h2v1h-2zM2 2h4v1h-4zM3 3h2v1h-2zM2 4h4v1h-4zM1 5h2v1h-2zM5 5h2v1h-2zM0 6h2v1h-2zM6 6h2v1h-2z" fill="#000"/></svg><svg class="ic" style="left:624px;top:214px" width="6" height="9" viewBox="0 0 6 9"><path d="M1 0h4v1h-4zM0 1h2v2h-2zM4 1h2v2h-2zM3 3h2v1h-2zM2 4h2v2h-2zM2 7h2v2h-2z" fill="#000"/></svg><span class="t ms" style="left:234.80px;top:243px;letter-spacing:-0.147px">Plantillas de directiva a<u>c</u>tuales:</span><div style="left:235px;top:262px;width:405px;height:162px;background:#fff"></div><div style="left:235px;top:262px;width:405px;height:1px;background:#808080"></div><div style="left:235px;top:262px;width:1px;height:162px;background:#808080"></div><div style="left:235px;top:423px;width:405px;height:1px;background:#ffffff"></div><div style="left:639px;top:262px;width:1px;height:162px;background:#ffffff"></div><div style="left:236px;top:263px;width:403px;height:1px;background:#404040"></div><div style="left:236px;top:263px;width:1px;height:160px;background:#404040"></div><div style="left:236px;top:422px;width:403px;height:1px;background:#d4d0c8"></div><div style="left:638px;top:263px;width:1px;height:160px;background:#d4d0c8"></div><div style="left:237px;top:264px;width:240px;height:17px;background:#d4d0c8"></div><div style="left:237px;top:264px;width:240px;height:1px;background:#ffffff"></div><div style="left:237px;top:264px;width:1px;height:17px;background:#ffffff"></div><div style="left:237px;top:280px;width:240px;height:1px;background:#404040"></div><div style="left:476px;top:264px;width:1px;height:17px;background:#404040"></div><div style="left:238px;top:279px;width:238px;height:1px;background:#808080"></div><div style="left:475px;top:265px;width:1px;height:15px;background:#808080"></div><div style="left:477px;top:264px;width:60px;height:17px;background:#d4d0c8"></div><div style="left:477px;top:264px;width:60px;height:1px;background:#ffffff"></div><div style="left:477px;top:264px;width:1px;height:17px;background:#ffffff"></div><div style="left:477px;top:280px;width:60px;height:1px;background:#404040"></div><div style="left:536px;top:264px;width:1px;height:17px;background:#404040"></div><div style="left:478px;top:279px;width:58px;height:1px;background:#808080"></div><div style="left:535px;top:265px;width:1px;height:15px;background:#808080"></div><div style="left:537px;top:264px;width:101px;height:17px;background:#d4d0c8"></div><div style="left:537px;top:264px;width:101px;height:1px;background:#ffffff"></div><div style="left:537px;top:264px;width:1px;height:17px;background:#ffffff"></div><div style="left:537px;top:280px;width:101px;height:1px;background:#404040"></div><div style="left:637px;top:264px;width:1px;height:17px;background:#404040"></div><div style="left:538px;top:279px;width:99px;height:1px;background:#808080"></div><div style="left:636px;top:265px;width:1px;height:15px;background:#808080"></div><span class="t ms" style="left:242.50px;top:268px;letter-spacing:-0.240px">Nombre</span><span class="t ms" style="left:493.00px;top:268px;letter-spacing:-0.180px">Tama&ntilde;o</span><span class="t ms" style="left:542.70px;top:268px;letter-spacing:-0.056px">Modificado</span><div style="left:257px;top:281px;width:381px;height:17px;background:#0a246a;outline:1px dotted #f5db95;outline-offset:-1px"></div><svg class="ic" style="left:243px;top:281px" width="14" height="16" viewBox="0 0 14 16"><use href="#docsel"/></svg><span class="t ms w" style="left:259.80px;top:284px;letter-spacing:-0.333px">conf</span><span class="t ms w" style="left:505.60px;top:284px;letter-spacing:-0.433px">42KB</span><span class="t ms w" style="left:543.60px;top:284px;letter-spacing:0.113px">14/04/2006 14:00</span><svg class="ic" style="left:243px;top:298px" width="14" height="16" viewBox="0 0 14 16"><use href="#doc"/></svg><span class="t ms" style="left:258.80px;top:301px;letter-spacing:-0.267px">inetres</span><span class="t ms" style="left:492.80px;top:301px;letter-spacing:-0.300px">1762KB</span><span class="t ms" style="left:543.60px;top:301px;letter-spacing:0.113px">14/04/2006 14:00</span><svg class="ic" style="left:243px;top:315px" width="14" height="16" viewBox="0 0 14 16"><use href="#doc"/></svg><span class="t ms" style="left:259.80px;top:318px;letter-spacing:-0.520px">system</span><span class="t ms" style="left:492.80px;top:318px;letter-spacing:-0.300px">1946KB</span><span class="t ms" style="left:543.60px;top:318px;letter-spacing:0.113px">14/04/2006 14:00</span><svg class="ic" style="left:243px;top:332px" width="14" height="16" viewBox="0 0 14 16"><use href="#doc"/></svg><span class="t ms" style="left:259.80px;top:335px;letter-spacing:-0.586px">wmplayer</span><span class="t ms" style="left:505.60px;top:335px;letter-spacing:-0.433px">73KB</span><span class="t ms" style="left:543.60px;top:335px;letter-spacing:0.113px">14/04/2006 14:00</span><svg class="ic" style="left:243px;top:349px" width="14" height="16" viewBox="0 0 14 16"><use href="#doc"/></svg><span class="t ms" style="left:259.80px;top:352px;letter-spacing:-0.167px">wuau</span><span class="t ms" style="left:505.60px;top:352px;letter-spacing:-0.433px">61KB</span><span class="t ms" style="left:544.60px;top:352px;letter-spacing:0.047px">06/08/2009 20:22</span><div style="left:235px;top:440px;width:75px;height:23px;background:#d4d0c8"></div><div style="left:235px;top:440px;width:75px;height:1px;background:#ffffff"></div><div style="left:235px;top:440px;width:1px;height:23px;background:#ffffff"></div><div style="left:235px;top:462px;width:75px;height:1px;background:#404040"></div><div style="left:309px;top:440px;width:1px;height:23px;background:#404040"></div><div style="left:236px;top:461px;width:73px;height:1px;background:#808080"></div><div style="left:308px;top:441px;width:1px;height:21px;background:#808080"></div><span class="t ms" style="left:249.00px;top:445px;letter-spacing:-0.167px"><u>A</u>gregar...</span><div style="left:322px;top:440px;width:75px;height:23px;background:#d4d0c8"></div><div style="left:322px;top:440px;width:75px;height:1px;background:#ffffff"></div><div style="left:322px;top:440px;width:1px;height:23px;background:#ffffff"></div><div style="left:322px;top:462px;width:75px;height:1px;background:#404040"></div><div style="left:396px;top:440px;width:1px;height:23px;background:#404040"></div><div style="left:323px;top:461px;width:73px;height:1px;background:#808080"></div><div style="left:395px;top:441px;width:1px;height:21px;background:#808080"></div><span class="t ms" style="left:345.60px;top:445px;letter-spacing:-0.500px">Q<u>u</u>itar</span><div style="left:567px;top:440px;width:75px;height:23px;background:#000"></div><div style="left:568px;top:441px;width:73px;height:21px;background:#d4d0c8"></div><div style="left:568px;top:441px;width:73px;height:1px;background:#ffffff"></div><div style="left:568px;top:441px;width:1px;height:21px;background:#ffffff"></div><div style="left:568px;top:461px;width:73px;height:1px;background:#404040"></div><div style="left:640px;top:441px;width:1px;height:21px;background:#404040"></div><div style="left:569px;top:460px;width:71px;height:1px;background:#808080"></div><div style="left:639px;top:442px;width:1px;height:19px;background:#808080"></div><span class="t ms" style="left:590.60px;top:445px;letter-spacing:-0.720px">C<u>e</u>rrar</span><svg class="ic" style="left:4px;top:0px" width="13" height="16" viewBox="0 0 13 16"><use href="#cursor"/></svg></body></html>
